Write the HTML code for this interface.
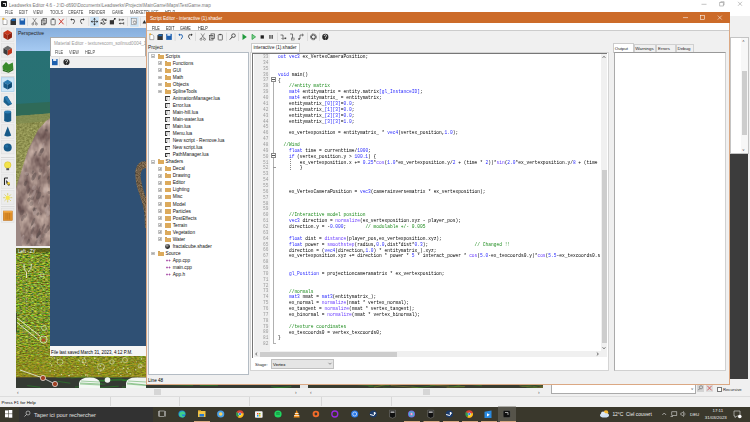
<!DOCTYPE html><html><head><meta charset="utf-8"><style>
*{margin:0;padding:0;box-sizing:border-box}
html,body{width:750px;height:422px;overflow:hidden;background:#f0f0f0;font-family:"Liberation Sans",sans-serif}
div{position:absolute}
.t{white-space:pre;line-height:1.2}
b{font-weight:normal;color:#2b2bff}i{font-style:normal;color:#6a3cff}u{text-decoration:none;color:#2b2bff}s{text-decoration:none;color:#1a8a1a}
.m{font-family:"Liberation Mono",monospace;white-space:pre}
</style></head><body>
<div style="left:0px;top:0px;width:750px;height:16px;background:#fff"></div>
<div style="left:1px;top:1px;width:6px;height:6px;background:#1a1a1a;border-radius:1px"></div>
<div style="left:3px;top:2.5px;width:2.5px;height:3px;border-top:0.7px solid #ddd;border-right:0.7px solid #ddd"></div>
<div class="t" style="left:9px;top:2.57px;font-size:4.6px;color:#777;">Leadwerks Editor 4.6 - J:\D-d690\Documents\Leadwerks\Projects\MainGame\Maps\TestGame.map</div>
<svg style="position:absolute;left:690px;top:0" width="60" height="9" viewBox="690 0 60 9"><line x1="701.5" y1="4.3" x2="706.5" y2="4.3" stroke="#888" stroke-width="0.5"/><rect x="719.8" y="2.6" width="3.4" height="3.4" fill="none" stroke="#888" stroke-width="0.5"/><path d="M720.8,2.6 L720.8,1.7 L724.1,1.7 L724.1,5 L723.2,5" fill="none" stroke="#888" stroke-width="0.5"/><path d="M738,1.8 L742,5.8 M742,1.8 L738,5.8" stroke="#888" stroke-width="0.5"/></svg>
<div class="t" style="left:5px;top:10.21px;font-size:4.7px;color:#444;transform:scaleX(0.82);transform-origin:0 0;">FILE</div>
<div class="t" style="left:19px;top:10.21px;font-size:4.7px;color:#444;transform:scaleX(0.82);transform-origin:0 0;">EDIT</div>
<div class="t" style="left:33px;top:10.21px;font-size:4.7px;color:#444;transform:scaleX(0.82);transform-origin:0 0;">VIEW</div>
<div class="t" style="left:50px;top:10.21px;font-size:4.7px;color:#444;transform:scaleX(0.82);transform-origin:0 0;">TOOLS</div>
<div class="t" style="left:68px;top:10.21px;font-size:4.7px;color:#444;transform:scaleX(0.82);transform-origin:0 0;">CREATE</div>
<div class="t" style="left:89px;top:10.21px;font-size:4.7px;color:#444;transform:scaleX(0.82);transform-origin:0 0;">RENDER</div>
<div class="t" style="left:112px;top:10.21px;font-size:4.7px;color:#444;transform:scaleX(0.82);transform-origin:0 0;">GAME</div>
<div class="t" style="left:130px;top:10.21px;font-size:4.7px;color:#444;transform:scaleX(0.82);transform-origin:0 0;">MARKETPLACE</div>
<div class="t" style="left:165px;top:10.21px;font-size:4.7px;color:#444;transform:scaleX(0.82);transform-origin:0 0;">HELP</div>
<div style="left:0px;top:16px;width:750px;height:12px;background:#f0f0f0;border-top:0.5px solid #e0e0e0"></div>
<svg style="position:absolute;left:0px;top:16px" width="150" height="12" viewBox="0 16 150 12"><path d="M3,19 L5.5,19 L7,20.5 L7,24.5 L3,24.5Z" fill="#fff" stroke="#666" stroke-width="0.5"/><circle cx="3.3" cy="18.8" r="1.1" fill="#f0b030"/><path d="M10.5,20 L12.5,18.5 L16,18.5 L16,25 L10.5,25Z" fill="#333"/><path d="M11.5,19 L15.5,19 L15.5,21 L11.5,21Z" fill="#1e66b0"/><rect x="19.5" y="18.5" width="5.6" height="6.2" fill="#1d5fae"/><rect x="20.6" y="18.5" width="3.2" height="2" fill="#dde8f5"/><rect x="27.3" y="17.5" width="0.5" height="8.5" fill="#c8c8c8"/><path d="M32.8,18 L36.4,23.5 M36.4,18 L32.8,23.5" stroke="#555" stroke-width="0.6"/><circle cx="32.8" cy="24" r="1" fill="none" stroke="#555" stroke-width="0.6"/><circle cx="36.4" cy="24" r="1" fill="none" stroke="#555" stroke-width="0.6"/><rect x="41.5" y="20" width="3.5" height="4.8" fill="none" stroke="#444" stroke-width="0.7"/><rect x="43" y="18.5" width="3.5" height="4.8" fill="none" stroke="#444" stroke-width="0.7"/><rect x="51" y="19.2" width="4.2" height="5.6" rx="0.6" fill="none" stroke="#444" stroke-width="0.7"/><rect x="52.2" y="18.5" width="1.8" height="1.2" fill="#444"/><path d="M58.8,18.8 L63.6,24.3 M63.6,18.8 L58.8,24.3" stroke="#c8281c" stroke-width="0.9"/><rect x="66.4" y="17.5" width="0.5" height="8.5" fill="#c8c8c8"/><path d="M71,19.5 L74,19.5 Q75.5,21.5 73,24" stroke="#333" stroke-width="0.8" fill="none"/><path d="M70.3,19.5 L72,18.2 L72,20.8Z" fill="#333"/><path d="M84,19.5 L81,19.5 Q79.5,21.5 82,24" stroke="#333" stroke-width="0.8" fill="none"/><path d="M84.7,19.5 L83,18.2 L83,20.8Z" fill="#333"/><rect x="88.6" y="17.5" width="0.5" height="8.5" fill="#c8c8c8"/><rect x="90.2" y="16.8" width="8.6" height="10" fill="#cce4f7"/><path d="M94.5,18.8 L94.5,24.4 M91.7,21.6 L97.3,21.6" stroke="#333" stroke-width="0.6"/><path d="M94.5,17.8 L93.2,19.4 L95.8,19.4Z M94.5,25.4 L93.2,23.8 L95.8,23.8Z M90.8,21.6 L92.4,20.3 L92.4,22.9Z M98.2,21.6 L96.6,20.3 L96.6,22.9Z" fill="#333"/><path d="M101.2,20.5 A2.6,2.6 0 0 1 105.8,20.3 M105.8,22.7 A2.6,2.6 0 0 1 101.2,22.9" stroke="#333" stroke-width="0.9" fill="none"/><path d="M106.4,18.6 L106.4,21 L104.2,20.6Z M100.6,24.6 L100.6,22.2 L102.8,22.6Z" fill="#333"/><path d="M102.5,19.8 L104.5,23.4" stroke="#333" stroke-width="0.8"/><rect x="109.8" y="20.2" width="4.2" height="4.2" fill="#333"/><path d="M112,22 L115,18.5" stroke="#333" stroke-width="0.8"/><rect x="114" y="18" width="1.6" height="1.6" fill="#333"/><path d="M119.3,18.6 L119.3,21 M119.3,19.8 L123.2,19.8 M123.7,22.2 L123.7,24.6 M119.8,23.4 L123.7,23.4" stroke="#333" stroke-width="0.7"/><path d="M124.2,19.8 L122.6,18.8 L122.6,20.8Z M118.8,23.4 L120.4,22.4 L120.4,24.4Z" fill="#333"/><rect x="127.2" y="17.5" width="0.5" height="8.5" fill="#c8c8c8"/><rect x="130.2" y="16.8" width="8.4" height="10" fill="#cce4f7"/><rect x="131.6" y="18.6" width="5" height="6" fill="#f4f4f4" stroke="#777" stroke-width="0.5"/><path d="M132.6,20 L135.6,20 M132.6,21.2 L135.6,21.2" stroke="#aaa" stroke-width="0.4"/><circle cx="134.6" cy="22.4" r="1.3" fill="none" stroke="#555" stroke-width="0.5"/><rect x="140.2" y="17.5" width="0.5" height="8.5" fill="#c8c8c8"/><path d="M142.5,23.5 L144.4,20 L146.3,23.5Z" fill="#333"/></svg>
<div style="left:0px;top:28px;width:16px;height:368px;background:#f0f0f0"></div>
<svg style="position:absolute;left:0px;top:26px" width="16" height="200" viewBox="0 26 16 200"><rect x="1.5" y="28" width="12.5" height="13.5" fill="#ececec" stroke="#dcdcdc" stroke-width="0.5"/><rect x="1.5" y="43.6" width="12.5" height="13.5" fill="#ececec" stroke="#dcdcdc" stroke-width="0.5"/><rect x="1.5" y="60.2" width="12.5" height="13.5" fill="#ececec" stroke="#dcdcdc" stroke-width="0.5"/><rect x="1.5" y="77.7" width="12.5" height="13.5" fill="#ececec" stroke="#dcdcdc" stroke-width="0.5"/><rect x="1.5" y="93.8" width="12.5" height="13.5" fill="#ececec" stroke="#dcdcdc" stroke-width="0.5"/><rect x="1.5" y="109.2" width="12.5" height="13.5" fill="#ececec" stroke="#dcdcdc" stroke-width="0.5"/><rect x="1.5" y="124.80000000000001" width="12.5" height="13.5" fill="#ececec" stroke="#dcdcdc" stroke-width="0.5"/><rect x="1.5" y="140.4" width="12.5" height="13.5" fill="#ececec" stroke="#dcdcdc" stroke-width="0.5"/><rect x="1.5" y="159.4" width="12.5" height="13.5" fill="#ececec" stroke="#dcdcdc" stroke-width="0.5"/><rect x="1.5" y="174.8" width="12.5" height="13.5" fill="#ececec" stroke="#dcdcdc" stroke-width="0.5"/><rect x="1.5" y="190.7" width="12.5" height="13.5" fill="#ececec" stroke="#dcdcdc" stroke-width="0.5"/><rect x="1.5" y="208.7" width="12.5" height="13.5" fill="#ececec" stroke="#dcdcdc" stroke-width="0.5"/><rect x="1" y="76.2" width="13.5" height="0.6" fill="#c8c8c8"/><rect x="1" y="157" width="13.5" height="0.6" fill="#c8c8c8"/><rect x="1" y="206.5" width="13.5" height="0.6" fill="#c8c8c8"/><rect x="1.5" y="77.8" width="12.5" height="13.5" fill="#cde6f7" stroke="#98c8ec" stroke-width="0.6"/><polygon points="7.7,30.1 11.963000000000001,32.55 7.7,35 3.4370000000000003,32.55" fill="#c8381c"/><polygon points="3.4370000000000003,32.55 7.7,35 7.7,39.9 3.4370000000000003,37.45" fill="#a82a14"/><polygon points="11.963000000000001,32.55 7.7,35 7.7,39.9 11.963000000000001,37.45" fill="#8c200e"/><polygon points="7.7,45.7 11.963000000000001,48.15 7.7,50.6 3.4370000000000003,48.15" fill="#6a6a6a"/><polygon points="3.4370000000000003,48.15 7.7,50.6 7.7,55.5 3.4370000000000003,53.050000000000004" fill="#3c3c3c"/><polygon points="11.963000000000001,48.15 7.7,50.6 7.7,55.5 11.963000000000001,53.050000000000004" fill="#c03418"/><path d="M2.5,66 L6,62 L8.8,64.6 L12.8,62.5 L13.3,68.5 L8.6,71.5 L2.8,69.5 Z" fill="#3a8a2c"/><path d="M2.8,69.5 L8.6,71.5 L13.3,68.5 L13.3,70.3 L8.6,72.8 L2.8,71Z" fill="#2a6a20"/><polygon points="7.7,79.8 11.963000000000001,82.25 7.7,84.7 3.4370000000000003,82.25" fill="#2a7ab0"/><polygon points="3.4370000000000003,82.25 7.7,84.7 7.7,89.60000000000001 3.4370000000000003,87.15" fill="#175a88"/><polygon points="11.963000000000001,82.25 7.7,84.7 7.7,89.60000000000001 11.963000000000001,87.15" fill="#0f4a74"/><path d="M4,97 L7,96 L12,104 L8,106 L3.5,102 Z" fill="#1a5f8c"/><path d="M4,97 L7,96 L12,104 L8.5,103.5Z" fill="#2a7ab0"/><rect x="4.2" y="112" width="7" height="8.5" fill="#175a88"/><ellipse cx="7.7" cy="112" rx="3.5" ry="1.4" fill="#2a7ab0"/><ellipse cx="7.7" cy="120.5" rx="3.5" ry="1.4" fill="#175a88"/><path d="M7.7,126.5 L11.2,135.5 Q7.7,137.5 4.2,135.5 Z" fill="#175a88"/><circle cx="7.7" cy="147.4" r="4" fill="#175a88"/><circle cx="6.6" cy="146.2" r="1.6" fill="#2a7ab0" opacity="0.6"/><circle cx="7.7" cy="165" r="3.3" fill="#f3e34a" stroke="#c8b020" stroke-width="0.4"/><rect x="6.3" y="168.2" width="2.8" height="2" fill="#555"/><path d="M4.5,178 L4.5,185 M4.5,178 L8,178" stroke="#222" stroke-width="1.1" fill="none"/><path d="M6,180 L10,184 L9,186 L6.5,183.5Z" fill="#222"/><circle cx="8.6" cy="183.4" r="1.4" fill="#f0d030"/><line x1="10.30" y1="197.70" x2="12.30" y2="197.70" stroke="#c8b830" stroke-width="0.6"/><line x1="5.10" y1="197.70" x2="3.10" y2="197.70" stroke="#c8b830" stroke-width="0.6"/><line x1="7.70" y1="200.30" x2="7.70" y2="202.30" stroke="#c8b830" stroke-width="0.6"/><line x1="7.70" y1="195.10" x2="7.70" y2="193.10" stroke="#c8b830" stroke-width="0.6"/><line x1="9.52" y1="199.52" x2="10.92" y2="200.92" stroke="#c8b830" stroke-width="0.6"/><line x1="5.88" y1="199.52" x2="4.48" y2="200.92" stroke="#c8b830" stroke-width="0.6"/><line x1="9.52" y1="195.88" x2="10.92" y2="194.48" stroke="#c8b830" stroke-width="0.6"/><line x1="5.88" y1="195.88" x2="4.48" y2="194.48" stroke="#c8b830" stroke-width="0.6"/><circle cx="7.7" cy="197.7" r="2.2" fill="#f5e650"/><rect x="3.3" y="211" width="9" height="9.5" fill="#e0902a" stroke="#b86a18" stroke-width="0.5"/><rect x="3.3" y="211" width="9" height="1.5" fill="#f0a845"/><line x1="6" y1="213" x2="6" y2="219.5" stroke="#b06818" stroke-width="0.5"/><line x1="7.8" y1="213" x2="7.8" y2="219.5" stroke="#b06818" stroke-width="0.5"/><line x1="9.6" y1="213" x2="9.6" y2="219.5" stroke="#b06818" stroke-width="0.5"/></svg>
<svg style="position:absolute;left:16px;top:28px" width="130" height="218" viewBox="16 28 130 218"><defs><linearGradient id="sky" x1="0" y1="0" x2="0" y2="1"><stop offset="0" stop-color="#86aedc"/><stop offset="1" stop-color="#a6caf2"/></linearGradient><linearGradient id="sea" x1="0" y1="0" x2="0" y2="1"><stop offset="0" stop-color="#287174"/><stop offset="1" stop-color="#2a6f70"/></linearGradient><linearGradient id="grass" x1="0" y1="0" x2="1" y2="1"><stop offset="0" stop-color="#8a9050"/><stop offset="1" stop-color="#a49a62"/></linearGradient></defs><rect x="16" y="28" width="130" height="23" fill="url(#sky)"/><rect x="16" y="51" width="130" height="195" fill="url(#sea)"/><path d="M16,104 L146,96 L146,246 L16,246Z" fill="#2f6a58"/><defs><filter id="gr" color-interpolation-filters="sRGB" x="16" y="100" width="130" height="146" filterUnits="userSpaceOnUse"><feTurbulence type="fractalNoise" baseFrequency="0.4 0.6" numOctaves="2" seed="4" result="t"/><feColorMatrix in="t" type="matrix" values="0 0 0 0.35 0.39  0 0 0 0.35 0.40  0 0 0 0.3 0.17  0 0 0 0 1"/><feComposite in2="SourceGraphic" operator="in"/></filter></defs><path d="M16,116 L146,106 L146,246 L16,246Z" fill="#9a985c" filter="url(#gr)"/><path d="M16,116 L146,106 L146,112 L16,124Z" fill="#7c8a50" opacity="0.7"/><defs><filter id="rk" color-interpolation-filters="sRGB" x="16" y="100" width="130" height="146" filterUnits="userSpaceOnUse"><feTurbulence type="fractalNoise" baseFrequency="0.12 0.07" numOctaves="3" seed="12" result="t"/><feColorMatrix in="t" type="matrix" values="0 0 0 0.55 0.33  0 0 0 0.55 0.24  0 0 0 0.5 0.24  0 0 0 0 1"/><feComposite in2="SourceGraphic" operator="in"/></filter></defs><path d="M16,188 L28,150 L38,130 L46,121 L52,117 L146,110 L146,246 L16,246Z" fill="#8a7877" filter="url(#rk)"/><ellipse cx="28.7" cy="190.9" rx="1.1" ry="3.1" fill="#5a4c4c" opacity="0.4" transform="rotate(25 28.7 190.9)"/><ellipse cx="39.0" cy="235.0" rx="1.2" ry="2.9" fill="#6c5e5c" opacity="0.4" transform="rotate(25 39.0 235.0)"/><ellipse cx="49.9" cy="181.9" rx="1.8" ry="2.7" fill="#6c5e5c" opacity="0.4" transform="rotate(25 49.9 181.9)"/><ellipse cx="47.9" cy="172.2" rx="0.5" ry="3.7" fill="#6c5e5c" opacity="0.4" transform="rotate(25 47.9 172.2)"/><ellipse cx="43.2" cy="196.5" rx="1.0" ry="1.1" fill="#4a4040" opacity="0.4" transform="rotate(25 43.2 196.5)"/><ellipse cx="35.2" cy="212.0" rx="1.8" ry="3.5" fill="#b8a8a4" opacity="0.4" transform="rotate(25 35.2 212.0)"/><ellipse cx="33.1" cy="221.9" rx="1.2" ry="4.3" fill="#4a4040" opacity="0.4" transform="rotate(25 33.1 221.9)"/><ellipse cx="28.1" cy="241.8" rx="1.2" ry="3.2" fill="#4a4040" opacity="0.4" transform="rotate(25 28.1 241.8)"/><ellipse cx="33.8" cy="225.9" rx="1.4" ry="2.9" fill="#b8a8a4" opacity="0.4" transform="rotate(25 33.8 225.9)"/><ellipse cx="38.4" cy="234.4" rx="1.5" ry="4.3" fill="#4a4040" opacity="0.4" transform="rotate(25 38.4 234.4)"/><ellipse cx="49.7" cy="206.2" rx="0.7" ry="4.0" fill="#5a4c4c" opacity="0.4" transform="rotate(25 49.7 206.2)"/><ellipse cx="42.0" cy="150.5" rx="1.7" ry="3.0" fill="#4a4040" opacity="0.4" transform="rotate(25 42.0 150.5)"/><ellipse cx="25.5" cy="183.3" rx="1.5" ry="2.7" fill="#4a4040" opacity="0.4" transform="rotate(25 25.5 183.3)"/><ellipse cx="44.4" cy="174.7" rx="0.7" ry="2.0" fill="#b8a8a4" opacity="0.4" transform="rotate(25 44.4 174.7)"/><ellipse cx="46.4" cy="130.3" rx="1.4" ry="1.2" fill="#4a4040" opacity="0.4" transform="rotate(25 46.4 130.3)"/><ellipse cx="37.4" cy="236.5" rx="0.9" ry="1.8" fill="#5a4c4c" opacity="0.4" transform="rotate(25 37.4 236.5)"/><ellipse cx="27.5" cy="174.4" rx="1.4" ry="1.5" fill="#5a4c4c" opacity="0.4" transform="rotate(25 27.5 174.4)"/><ellipse cx="49.4" cy="166.1" rx="1.0" ry="1.5" fill="#b8a8a4" opacity="0.4" transform="rotate(25 49.4 166.1)"/><ellipse cx="32.5" cy="230.3" rx="1.1" ry="4.0" fill="#5a4c4c" opacity="0.4" transform="rotate(25 32.5 230.3)"/><ellipse cx="39.4" cy="238.8" rx="1.3" ry="2.5" fill="#6c5e5c" opacity="0.4" transform="rotate(25 39.4 238.8)"/><ellipse cx="48.2" cy="177.9" rx="0.9" ry="2.1" fill="#4a4040" opacity="0.4" transform="rotate(25 48.2 177.9)"/><ellipse cx="39.2" cy="201.5" rx="0.6" ry="3.2" fill="#b8a8a4" opacity="0.4" transform="rotate(25 39.2 201.5)"/><ellipse cx="31.9" cy="236.0" rx="1.4" ry="2.0" fill="#b8a8a4" opacity="0.4" transform="rotate(25 31.9 236.0)"/><ellipse cx="40.9" cy="241.6" rx="0.9" ry="2.6" fill="#4a4040" opacity="0.4" transform="rotate(25 40.9 241.6)"/><ellipse cx="43.2" cy="227.1" rx="0.9" ry="3.8" fill="#5a4c4c" opacity="0.4" transform="rotate(25 43.2 227.1)"/><ellipse cx="37.9" cy="214.0" rx="1.0" ry="1.8" fill="#4a4040" opacity="0.4" transform="rotate(25 37.9 214.0)"/><ellipse cx="34.2" cy="209.5" rx="0.7" ry="2.1" fill="#4a4040" opacity="0.4" transform="rotate(25 34.2 209.5)"/><ellipse cx="40.9" cy="152.2" rx="1.7" ry="4.4" fill="#5a4c4c" opacity="0.4" transform="rotate(25 40.9 152.2)"/><ellipse cx="31.4" cy="203.7" rx="1.8" ry="2.6" fill="#6c5e5c" opacity="0.4" transform="rotate(25 31.4 203.7)"/><ellipse cx="48.8" cy="163.1" rx="1.8" ry="3.0" fill="#4a4040" opacity="0.4" transform="rotate(25 48.8 163.1)"/><ellipse cx="31.5" cy="225.2" rx="0.6" ry="3.2" fill="#6c5e5c" opacity="0.4" transform="rotate(25 31.5 225.2)"/><ellipse cx="33.8" cy="187.7" rx="1.8" ry="2.6" fill="#b8a8a4" opacity="0.4" transform="rotate(25 33.8 187.7)"/><ellipse cx="30.1" cy="193.8" rx="0.6" ry="2.4" fill="#6c5e5c" opacity="0.4" transform="rotate(25 30.1 193.8)"/><ellipse cx="22.1" cy="239.1" rx="1.8" ry="4.5" fill="#b8a8a4" opacity="0.4" transform="rotate(25 22.1 239.1)"/><ellipse cx="37.6" cy="244.3" rx="1.6" ry="1.1" fill="#b8a8a4" opacity="0.4" transform="rotate(25 37.6 244.3)"/><ellipse cx="45.4" cy="205.2" rx="1.3" ry="2.0" fill="#4a4040" opacity="0.4" transform="rotate(25 45.4 205.2)"/><ellipse cx="46.9" cy="229.2" rx="1.8" ry="4.4" fill="#5a4c4c" opacity="0.4" transform="rotate(25 46.9 229.2)"/><ellipse cx="47.3" cy="208.9" rx="1.9" ry="4.1" fill="#b8a8a4" opacity="0.4" transform="rotate(25 47.3 208.9)"/><ellipse cx="42.9" cy="145.8" rx="0.9" ry="3.3" fill="#b8a8a4" opacity="0.4" transform="rotate(25 42.9 145.8)"/><ellipse cx="23.5" cy="235.5" rx="0.7" ry="1.4" fill="#b8a8a4" opacity="0.4" transform="rotate(25 23.5 235.5)"/><ellipse cx="46.9" cy="139.4" rx="0.9" ry="2.0" fill="#6c5e5c" opacity="0.4" transform="rotate(25 46.9 139.4)"/><ellipse cx="39.6" cy="229.4" rx="0.6" ry="1.9" fill="#4a4040" opacity="0.4" transform="rotate(25 39.6 229.4)"/><ellipse cx="39.3" cy="187.9" rx="0.6" ry="2.1" fill="#5a4c4c" opacity="0.4" transform="rotate(25 39.3 187.9)"/><ellipse cx="46.0" cy="218.8" rx="0.6" ry="1.2" fill="#b8a8a4" opacity="0.4" transform="rotate(25 46.0 218.8)"/><ellipse cx="49.3" cy="228.4" rx="0.6" ry="2.8" fill="#4a4040" opacity="0.4" transform="rotate(25 49.3 228.4)"/><ellipse cx="32.8" cy="172.1" rx="1.0" ry="1.9" fill="#4a4040" opacity="0.4" transform="rotate(25 32.8 172.1)"/><ellipse cx="22.1" cy="212.5" rx="1.7" ry="3.0" fill="#5a4c4c" opacity="0.4" transform="rotate(25 22.1 212.5)"/><ellipse cx="32.5" cy="198.1" rx="1.7" ry="2.3" fill="#5a4c4c" opacity="0.4" transform="rotate(25 32.5 198.1)"/><ellipse cx="39.4" cy="177.2" rx="1.1" ry="2.7" fill="#4a4040" opacity="0.4" transform="rotate(25 39.4 177.2)"/><ellipse cx="33.8" cy="209.0" rx="1.2" ry="1.9" fill="#4a4040" opacity="0.4" transform="rotate(25 33.8 209.0)"/><ellipse cx="33.9" cy="176.5" rx="1.8" ry="4.3" fill="#4a4040" opacity="0.4" transform="rotate(25 33.9 176.5)"/><ellipse cx="49.1" cy="192.6" rx="1.8" ry="1.4" fill="#5a4c4c" opacity="0.4" transform="rotate(25 49.1 192.6)"/><ellipse cx="48.3" cy="213.5" rx="1.8" ry="2.9" fill="#b8a8a4" opacity="0.4" transform="rotate(25 48.3 213.5)"/><ellipse cx="40.7" cy="213.8" rx="1.3" ry="1.4" fill="#5a4c4c" opacity="0.4" transform="rotate(25 40.7 213.8)"/><ellipse cx="35.3" cy="153.6" rx="1.1" ry="2.8" fill="#5a4c4c" opacity="0.4" transform="rotate(25 35.3 153.6)"/><ellipse cx="40.5" cy="170.5" rx="1.7" ry="2.2" fill="#5a4c4c" opacity="0.4" transform="rotate(25 40.5 170.5)"/><ellipse cx="35.5" cy="209.3" rx="0.9" ry="2.0" fill="#5a4c4c" opacity="0.4" transform="rotate(25 35.5 209.3)"/><ellipse cx="23.0" cy="217.9" rx="1.3" ry="3.5" fill="#5a4c4c" opacity="0.4" transform="rotate(25 23.0 217.9)"/><ellipse cx="37.5" cy="191.6" rx="1.8" ry="1.6" fill="#5a4c4c" opacity="0.4" transform="rotate(25 37.5 191.6)"/><ellipse cx="29.0" cy="199.5" rx="1.6" ry="2.4" fill="#4a4040" opacity="0.4" transform="rotate(25 29.0 199.5)"/><ellipse cx="38.8" cy="238.6" rx="1.3" ry="4.4" fill="#b8a8a4" opacity="0.4" transform="rotate(25 38.8 238.6)"/><ellipse cx="36.0" cy="242.7" rx="1.1" ry="3.6" fill="#6c5e5c" opacity="0.4" transform="rotate(25 36.0 242.7)"/><ellipse cx="33.6" cy="193.8" rx="1.4" ry="4.2" fill="#b8a8a4" opacity="0.4" transform="rotate(25 33.6 193.8)"/><ellipse cx="26.4" cy="173.5" rx="1.8" ry="1.6" fill="#b8a8a4" opacity="0.4" transform="rotate(25 26.4 173.5)"/><ellipse cx="42.9" cy="235.9" rx="1.3" ry="2.6" fill="#6c5e5c" opacity="0.4" transform="rotate(25 42.9 235.9)"/><ellipse cx="25.8" cy="216.0" rx="0.7" ry="2.8" fill="#6c5e5c" opacity="0.4" transform="rotate(25 25.8 216.0)"/><ellipse cx="45.8" cy="190.1" rx="1.7" ry="3.3" fill="#b8a8a4" opacity="0.4" transform="rotate(25 45.8 190.1)"/><ellipse cx="38.7" cy="195.7" rx="2.0" ry="4.1" fill="#4a4040" opacity="0.4" transform="rotate(25 38.7 195.7)"/><path d="M16,190 L16,246 L22,246 Z" fill="#9c8884"/></svg>
<div class="t" style="left:18px;top:29.55px;font-size:5.0px;color:#222;">Perspective</div>
<svg style="position:absolute;left:16px;top:248px" width="284" height="140" viewBox="16 248 284 140"><defs><filter id="nz" color-interpolation-filters="sRGB" x="16" y="248" width="284" height="129" filterUnits="userSpaceOnUse"><feTurbulence type="fractalNoise" baseFrequency="0.35 0.9" numOctaves="2" seed="5" result="t"/><feColorMatrix in="t" type="matrix" values="0.55 0 0 0.75 -0.15  0 0.55 0 0.75 -0.06  0 0 0.45 0.3 -0.2  0 0 0 0 1"/></filter></defs><rect x="16" y="248" width="284" height="129" fill="#7a8a25" filter="url(#nz)"/><line x1="108.0" y1="269.2" x2="114.0" y2="271.3" stroke="#c8b850" stroke-width="0.4" opacity="0.6"/><line x1="42.7" y1="324.0" x2="49.9" y2="329.9" stroke="#b09a30" stroke-width="0.4" opacity="0.6"/><line x1="139.2" y1="258.9" x2="151.7" y2="253.8" stroke="#c8b850" stroke-width="0.4" opacity="0.6"/><line x1="51.2" y1="278.4" x2="73.9" y2="285.8" stroke="#c8b850" stroke-width="0.4" opacity="0.6"/><line x1="182.3" y1="256.3" x2="198.1" y2="252.9" stroke="#b09a30" stroke-width="0.4" opacity="0.6"/><line x1="98.2" y1="268.3" x2="108.8" y2="264.5" stroke="#c8b850" stroke-width="0.4" opacity="0.6"/><line x1="67.3" y1="323.9" x2="79.1" y2="327.9" stroke="#c8b850" stroke-width="0.4" opacity="0.6"/><line x1="218.2" y1="321.7" x2="232.5" y2="326.2" stroke="#c8b850" stroke-width="0.4" opacity="0.6"/><line x1="137.4" y1="289.9" x2="151.0" y2="293.5" stroke="#a08a28" stroke-width="0.4" opacity="0.6"/><line x1="86.6" y1="272.8" x2="92.3" y2="276.1" stroke="#a08a28" stroke-width="0.4" opacity="0.6"/><line x1="165.2" y1="361.1" x2="174.9" y2="365.8" stroke="#b09a30" stroke-width="0.4" opacity="0.6"/><line x1="49.5" y1="303.1" x2="56.6" y2="306.8" stroke="#a08a28" stroke-width="0.4" opacity="0.6"/><line x1="135.8" y1="372.2" x2="150.7" y2="365.9" stroke="#a08a28" stroke-width="0.4" opacity="0.6"/><line x1="112.6" y1="294.5" x2="133.3" y2="297.5" stroke="#b09a30" stroke-width="0.4" opacity="0.6"/><line x1="254.6" y1="370.0" x2="272.7" y2="372.1" stroke="#b09a30" stroke-width="0.4" opacity="0.6"/><line x1="223.6" y1="289.3" x2="241.7" y2="294.0" stroke="#a08a28" stroke-width="0.4" opacity="0.6"/><line x1="96.8" y1="299.0" x2="101.9" y2="301.0" stroke="#a08a28" stroke-width="0.4" opacity="0.6"/><line x1="117.0" y1="327.6" x2="126.2" y2="328.9" stroke="#a08a28" stroke-width="0.4" opacity="0.6"/><line x1="52.7" y1="281.4" x2="75.2" y2="281.6" stroke="#b09a30" stroke-width="0.4" opacity="0.6"/><line x1="63.2" y1="301.0" x2="70.9" y2="299.9" stroke="#a08a28" stroke-width="0.4" opacity="0.6"/><line x1="261.4" y1="285.4" x2="273.5" y2="285.8" stroke="#a08a28" stroke-width="0.4" opacity="0.6"/><line x1="288.0" y1="269.2" x2="297.3" y2="266.6" stroke="#b09a30" stroke-width="0.4" opacity="0.6"/><line x1="19.4" y1="355.5" x2="29.7" y2="352.8" stroke="#b09a30" stroke-width="0.4" opacity="0.6"/><line x1="135.0" y1="296.9" x2="158.4" y2="302.5" stroke="#c8b850" stroke-width="0.4" opacity="0.6"/><line x1="260.0" y1="370.7" x2="278.6" y2="377.5" stroke="#a08a28" stroke-width="0.4" opacity="0.6"/><line x1="271.5" y1="349.1" x2="288.3" y2="361.5" stroke="#a08a28" stroke-width="0.4" opacity="0.6"/><line x1="129.1" y1="300.1" x2="142.0" y2="301.7" stroke="#b09a30" stroke-width="0.4" opacity="0.6"/><line x1="35.1" y1="276.5" x2="46.4" y2="273.1" stroke="#b09a30" stroke-width="0.4" opacity="0.6"/><line x1="45.1" y1="322.0" x2="68.6" y2="326.7" stroke="#c8b850" stroke-width="0.4" opacity="0.6"/><line x1="23.2" y1="361.0" x2="30.9" y2="363.4" stroke="#a08a28" stroke-width="0.4" opacity="0.6"/><line x1="287.4" y1="326.5" x2="294.6" y2="327.3" stroke="#a08a28" stroke-width="0.4" opacity="0.6"/><line x1="298.0" y1="309.2" x2="304.7" y2="310.0" stroke="#b09a30" stroke-width="0.4" opacity="0.6"/><line x1="228.9" y1="344.0" x2="247.6" y2="346.3" stroke="#c8b850" stroke-width="0.4" opacity="0.6"/><line x1="22.6" y1="370.8" x2="30.4" y2="372.2" stroke="#c8b850" stroke-width="0.4" opacity="0.6"/><line x1="275.6" y1="346.3" x2="293.4" y2="344.3" stroke="#b09a30" stroke-width="0.4" opacity="0.6"/><line x1="213.7" y1="283.2" x2="222.1" y2="283.0" stroke="#b09a30" stroke-width="0.4" opacity="0.6"/><line x1="167.3" y1="348.9" x2="176.7" y2="348.3" stroke="#b09a30" stroke-width="0.4" opacity="0.6"/><line x1="244.9" y1="353.9" x2="253.5" y2="358.2" stroke="#c8b850" stroke-width="0.4" opacity="0.6"/><line x1="156.0" y1="342.8" x2="170.6" y2="357.6" stroke="#a08a28" stroke-width="0.4" opacity="0.6"/><line x1="89.6" y1="338.0" x2="99.9" y2="347.4" stroke="#c8b850" stroke-width="0.4" opacity="0.6"/><line x1="296.6" y1="371.3" x2="306.0" y2="371.0" stroke="#b09a30" stroke-width="0.4" opacity="0.6"/><line x1="149.5" y1="292.9" x2="174.0" y2="296.0" stroke="#c8b850" stroke-width="0.4" opacity="0.6"/><line x1="254.7" y1="310.9" x2="274.4" y2="318.1" stroke="#b09a30" stroke-width="0.4" opacity="0.6"/><line x1="253.0" y1="265.2" x2="272.3" y2="265.3" stroke="#b09a30" stroke-width="0.4" opacity="0.6"/><line x1="151.8" y1="272.7" x2="161.8" y2="278.5" stroke="#c8b850" stroke-width="0.4" opacity="0.6"/><line x1="128.4" y1="301.0" x2="142.9" y2="314.0" stroke="#b09a30" stroke-width="0.4" opacity="0.6"/><line x1="298.0" y1="253.5" x2="311.8" y2="257.3" stroke="#c8b850" stroke-width="0.4" opacity="0.6"/><line x1="57.5" y1="355.0" x2="70.5" y2="367.7" stroke="#a08a28" stroke-width="0.4" opacity="0.6"/><line x1="60.3" y1="319.6" x2="79.0" y2="310.1" stroke="#c8b850" stroke-width="0.4" opacity="0.6"/><line x1="200.5" y1="316.9" x2="210.8" y2="325.8" stroke="#b09a30" stroke-width="0.4" opacity="0.6"/><line x1="250.6" y1="276.8" x2="261.3" y2="274.9" stroke="#b09a30" stroke-width="0.4" opacity="0.6"/><line x1="232.9" y1="291.4" x2="254.1" y2="295.9" stroke="#b09a30" stroke-width="0.4" opacity="0.6"/><line x1="274.4" y1="294.9" x2="291.0" y2="296.5" stroke="#c8b850" stroke-width="0.4" opacity="0.6"/><line x1="135.5" y1="366.6" x2="150.9" y2="368.9" stroke="#c8b850" stroke-width="0.4" opacity="0.6"/><line x1="161.0" y1="360.8" x2="176.0" y2="369.2" stroke="#b09a30" stroke-width="0.4" opacity="0.6"/><line x1="64.9" y1="310.1" x2="79.5" y2="317.0" stroke="#a08a28" stroke-width="0.4" opacity="0.6"/><line x1="209.8" y1="317.4" x2="230.1" y2="320.0" stroke="#c8b850" stroke-width="0.4" opacity="0.6"/><line x1="32.1" y1="274.3" x2="38.4" y2="271.3" stroke="#a08a28" stroke-width="0.4" opacity="0.6"/><line x1="175.5" y1="346.5" x2="186.3" y2="355.3" stroke="#c8b850" stroke-width="0.4" opacity="0.6"/><line x1="292.4" y1="327.0" x2="302.7" y2="324.5" stroke="#c8b850" stroke-width="0.4" opacity="0.6"/><line x1="167.5" y1="310.7" x2="181.7" y2="323.3" stroke="#a08a28" stroke-width="0.4" opacity="0.6"/><line x1="278.1" y1="363.4" x2="291.6" y2="360.1" stroke="#a08a28" stroke-width="0.4" opacity="0.6"/><line x1="50.5" y1="306.1" x2="59.6" y2="302.3" stroke="#b09a30" stroke-width="0.4" opacity="0.6"/><line x1="76.4" y1="288.5" x2="95.8" y2="281.6" stroke="#c8b850" stroke-width="0.4" opacity="0.6"/><line x1="198.7" y1="296.5" x2="206.4" y2="295.2" stroke="#a08a28" stroke-width="0.4" opacity="0.6"/><line x1="78.4" y1="371.0" x2="93.1" y2="371.2" stroke="#c8b850" stroke-width="0.4" opacity="0.6"/><line x1="252.4" y1="270.5" x2="267.7" y2="271.4" stroke="#a08a28" stroke-width="0.4" opacity="0.6"/><line x1="135.6" y1="295.3" x2="147.1" y2="290.7" stroke="#a08a28" stroke-width="0.4" opacity="0.6"/><line x1="173.4" y1="305.9" x2="183.7" y2="300.6" stroke="#c8b850" stroke-width="0.4" opacity="0.6"/><line x1="99.9" y1="372.0" x2="121.8" y2="363.9" stroke="#b09a30" stroke-width="0.4" opacity="0.6"/><line x1="292.0" y1="263.3" x2="297.7" y2="262.4" stroke="#b09a30" stroke-width="0.4" opacity="0.6"/><line x1="92.8" y1="266.5" x2="116.0" y2="267.6" stroke="#a08a28" stroke-width="0.4" opacity="0.6"/><line x1="131.3" y1="318.1" x2="146.0" y2="320.7" stroke="#a08a28" stroke-width="0.4" opacity="0.6"/><line x1="41.4" y1="257.3" x2="53.9" y2="262.5" stroke="#b09a30" stroke-width="0.4" opacity="0.6"/><line x1="92.4" y1="252.1" x2="101.8" y2="248.3" stroke="#c8b850" stroke-width="0.4" opacity="0.6"/><line x1="259.2" y1="258.5" x2="270.6" y2="266.7" stroke="#a08a28" stroke-width="0.4" opacity="0.6"/><line x1="298.4" y1="303.1" x2="311.8" y2="314.2" stroke="#b09a30" stroke-width="0.4" opacity="0.6"/><line x1="165.6" y1="280.3" x2="173.4" y2="277.4" stroke="#b09a30" stroke-width="0.4" opacity="0.6"/><line x1="67.4" y1="368.4" x2="82.3" y2="373.3" stroke="#b09a30" stroke-width="0.4" opacity="0.6"/><line x1="98.3" y1="313.5" x2="109.9" y2="310.3" stroke="#b09a30" stroke-width="0.4" opacity="0.6"/><line x1="298.4" y1="254.7" x2="311.9" y2="247.8" stroke="#b09a30" stroke-width="0.4" opacity="0.6"/><line x1="162.0" y1="281.2" x2="180.1" y2="282.7" stroke="#c8b850" stroke-width="0.4" opacity="0.6"/><line x1="138.7" y1="312.9" x2="149.5" y2="320.0" stroke="#c8b850" stroke-width="0.4" opacity="0.6"/><line x1="103.4" y1="277.3" x2="112.2" y2="275.5" stroke="#c8b850" stroke-width="0.4" opacity="0.6"/><line x1="223.0" y1="267.7" x2="240.4" y2="285.2" stroke="#b09a30" stroke-width="0.4" opacity="0.6"/><line x1="20.0" y1="329.4" x2="30.9" y2="337.6" stroke="#b09a30" stroke-width="0.4" opacity="0.6"/><line x1="40.0" y1="356.8" x2="54.9" y2="367.7" stroke="#a08a28" stroke-width="0.4" opacity="0.6"/><line x1="186.1" y1="338.0" x2="193.9" y2="334.3" stroke="#a08a28" stroke-width="0.4" opacity="0.6"/><line x1="142.6" y1="283.4" x2="160.5" y2="300.1" stroke="#c8b850" stroke-width="0.4" opacity="0.6"/><line x1="107.9" y1="254.4" x2="115.3" y2="260.0" stroke="#b09a30" stroke-width="0.4" opacity="0.6"/><rect x="16" y="248" width="284" height="4" fill="#4a4a22" opacity="0.6"/><defs><linearGradient id="och" x1="0" y1="0" x2="0" y2="1"><stop offset="0" stop-color="#9a8010" stop-opacity="0"/><stop offset="1" stop-color="#9a8010" stop-opacity="0.55"/></linearGradient></defs><rect x="16" y="330" width="284" height="47" fill="url(#och)"/><path d="M24,263.5 Q23.5,269 25.5,271.5 M31.5,264 Q32,269 28,272 M26.5,271.5 L26.5,278" stroke="#eef0e0" stroke-width="0.9" fill="none" opacity="0.9"/><path d="M26.5,280 L26.5,310" stroke="#dde0c8" stroke-width="0.5" stroke-dasharray="1.5 1.5" fill="none" opacity="0.7"/><rect x="16" y="248" width="284" height="4.5" fill="#5a5a10" opacity="0.45"/><path d="M17,318 L40,336 M17,322.5 L38,339.5" stroke="#eef0e0" stroke-width="0.9" fill="none" opacity="0.9"/><path d="M16.5,313 L16.5,332" stroke="#2a3a30" stroke-width="1" opacity="0.7"/><circle cx="43.5" cy="339.5" r="3.6" fill="none" stroke="#eef0e0" stroke-width="0.7"/><circle cx="43.5" cy="340" r="1.8" fill="#b04a28"/><circle cx="42" cy="275" r="2" fill="none" stroke="#e8ecd8" stroke-width="0.5"/><circle cx="44" cy="328" r="2.5" fill="none" stroke="#e8ecd8" stroke-width="0.5"/><circle cx="101" cy="367" r="3.5" fill="none" stroke="#e8ecd8" stroke-width="0.6" opacity="0.8"/><circle cx="84" cy="361" r="2" fill="none" stroke="#e8ecd8" stroke-width="0.6" opacity="0.8"/><circle cx="112" cy="362" r="2.2" fill="none" stroke="#e8ecd8" stroke-width="0.6" opacity="0.8"/><circle cx="125" cy="360" r="2.5" fill="none" stroke="#e8ecd8" stroke-width="0.6" opacity="0.8"/><circle cx="60" cy="362" r="3" fill="none" stroke="#e8ecd8" stroke-width="0.6" opacity="0.8"/><circle cx="140" cy="366" r="2" fill="none" stroke="#e8ecd8" stroke-width="0.6" opacity="0.8"/><circle cx="50.1" cy="363.6" r="0.6" fill="#eef0d8" opacity="0.7"/><circle cx="98.3" cy="360.0" r="0.6" fill="#eef0d8" opacity="0.7"/><circle cx="50.5" cy="361.3" r="0.4" fill="#eef0d8" opacity="0.7"/><circle cx="88.4" cy="356.8" r="0.3" fill="#eef0d8" opacity="0.7"/><circle cx="79.2" cy="360.7" r="0.7" fill="#eef0d8" opacity="0.7"/><circle cx="100.8" cy="371.0" r="0.7" fill="#eef0d8" opacity="0.7"/><circle cx="118.7" cy="373.6" r="0.5" fill="#eef0d8" opacity="0.7"/><circle cx="81.3" cy="375.7" r="0.4" fill="#eef0d8" opacity="0.7"/><circle cx="119.5" cy="368.9" r="0.3" fill="#eef0d8" opacity="0.7"/><circle cx="130.2" cy="373.8" r="0.7" fill="#eef0d8" opacity="0.7"/><circle cx="120.4" cy="372.2" r="0.4" fill="#eef0d8" opacity="0.7"/><circle cx="100.3" cy="366.1" r="0.8" fill="#eef0d8" opacity="0.7"/><circle cx="127.2" cy="372.5" r="0.7" fill="#eef0d8" opacity="0.7"/><circle cx="135.7" cy="369.7" r="0.7" fill="#eef0d8" opacity="0.7"/><circle cx="72.1" cy="356.6" r="0.4" fill="#eef0d8" opacity="0.7"/><circle cx="84.6" cy="358.1" r="0.8" fill="#eef0d8" opacity="0.7"/><circle cx="103.6" cy="368.6" r="0.7" fill="#eef0d8" opacity="0.7"/><circle cx="115.3" cy="365.8" r="0.3" fill="#eef0d8" opacity="0.7"/><circle cx="126.6" cy="371.0" r="0.6" fill="#eef0d8" opacity="0.7"/><circle cx="101.4" cy="369.2" r="0.3" fill="#eef0d8" opacity="0.7"/><circle cx="120.7" cy="361.0" r="0.3" fill="#eef0d8" opacity="0.7"/><circle cx="75.5" cy="370.6" r="0.4" fill="#eef0d8" opacity="0.7"/><circle cx="121.0" cy="375.5" r="0.6" fill="#eef0d8" opacity="0.7"/><circle cx="86.7" cy="365.6" r="0.7" fill="#eef0d8" opacity="0.7"/><circle cx="123.6" cy="368.3" r="0.7" fill="#eef0d8" opacity="0.7"/><circle cx="57.4" cy="358.9" r="0.5" fill="#eef0d8" opacity="0.7"/><circle cx="121.3" cy="362.1" r="0.6" fill="#eef0d8" opacity="0.7"/><circle cx="51.2" cy="357.2" r="0.5" fill="#eef0d8" opacity="0.7"/><circle cx="114.5" cy="369.8" r="0.7" fill="#eef0d8" opacity="0.7"/><circle cx="77.9" cy="366.3" r="0.6" fill="#eef0d8" opacity="0.7"/><circle cx="94.8" cy="358.4" r="0.8" fill="#eef0d8" opacity="0.7"/><circle cx="69.1" cy="375.6" r="0.9" fill="#eef0d8" opacity="0.7"/><circle cx="51.7" cy="365.2" r="0.8" fill="#eef0d8" opacity="0.7"/><circle cx="142.9" cy="365.0" r="0.5" fill="#eef0d8" opacity="0.7"/><circle cx="70.1" cy="374.9" r="0.4" fill="#eef0d8" opacity="0.7"/><circle cx="105.8" cy="358.8" r="0.6" fill="#eef0d8" opacity="0.7"/><circle cx="141.5" cy="358.7" r="0.8" fill="#eef0d8" opacity="0.7"/><circle cx="98.8" cy="373.7" r="0.7" fill="#eef0d8" opacity="0.7"/><circle cx="72.2" cy="374.0" r="0.6" fill="#eef0d8" opacity="0.7"/><circle cx="52.4" cy="356.1" r="0.6" fill="#eef0d8" opacity="0.7"/><circle cx="93.3" cy="362.0" r="0.4" fill="#eef0d8" opacity="0.7"/><circle cx="83.0" cy="362.3" r="0.8" fill="#eef0d8" opacity="0.7"/><circle cx="50.2" cy="371.0" r="0.8" fill="#eef0d8" opacity="0.7"/><circle cx="61.5" cy="374.5" r="0.7" fill="#eef0d8" opacity="0.7"/><circle cx="136.6" cy="361.8" r="0.5" fill="#eef0d8" opacity="0.7"/><circle cx="87.7" cy="376.0" r="0.7" fill="#eef0d8" opacity="0.7"/><circle cx="84.6" cy="364.6" r="0.5" fill="#eef0d8" opacity="0.7"/><circle cx="54.6" cy="358.0" r="0.8" fill="#eef0d8" opacity="0.7"/><circle cx="77.4" cy="374.7" r="0.4" fill="#eef0d8" opacity="0.7"/><circle cx="75.5" cy="366.2" r="0.4" fill="#eef0d8" opacity="0.7"/><circle cx="85.8" cy="375.1" r="0.8" fill="#eef0d8" opacity="0.7"/><circle cx="127.9" cy="368.6" r="0.8" fill="#eef0d8" opacity="0.7"/><circle cx="140.3" cy="367.0" r="0.7" fill="#eef0d8" opacity="0.7"/><circle cx="54.7" cy="370.6" r="0.6" fill="#eef0d8" opacity="0.7"/><circle cx="122.3" cy="368.9" r="0.5" fill="#eef0d8" opacity="0.7"/><circle cx="54.7" cy="374.5" r="0.4" fill="#eef0d8" opacity="0.7"/><circle cx="95.3" cy="362.9" r="0.5" fill="#eef0d8" opacity="0.7"/><circle cx="120.9" cy="375.5" r="0.5" fill="#eef0d8" opacity="0.7"/><circle cx="113.0" cy="362.0" r="0.6" fill="#eef0d8" opacity="0.7"/><circle cx="87.9" cy="359.3" r="0.4" fill="#eef0d8" opacity="0.7"/><rect x="16" y="377" width="284" height="11" fill="#353a33"/><line x1="75.0" y1="387.0" x2="94.0" y2="385.8" stroke="#2a8a2a" stroke-width="0.6"/><line x1="273.4" y1="388.0" x2="291.3" y2="386.5" stroke="#2a8a2a" stroke-width="0.6"/><line x1="70.6" y1="378.0" x2="86.2" y2="376.4" stroke="#2a8a2a" stroke-width="0.6"/><line x1="83.9" y1="379.8" x2="104.4" y2="381.4" stroke="#2a8a2a" stroke-width="0.6"/><line x1="228.9" y1="381.5" x2="246.0" y2="381.6" stroke="#2a8a2a" stroke-width="0.6"/><line x1="123.0" y1="380.7" x2="132.4" y2="379.8" stroke="#2a8a2a" stroke-width="0.6"/><line x1="290.8" y1="378.4" x2="309.9" y2="378.9" stroke="#2a8a2a" stroke-width="0.6"/><line x1="261.1" y1="379.4" x2="275.0" y2="378.4" stroke="#2a8a2a" stroke-width="0.6"/><line x1="129.5" y1="381.9" x2="158.5" y2="383.3" stroke="#2a8a2a" stroke-width="0.6"/><line x1="263.9" y1="377.2" x2="272.6" y2="378.1" stroke="#2a8a2a" stroke-width="0.6"/><line x1="270.4" y1="382.2" x2="291.3" y2="380.2" stroke="#2a8a2a" stroke-width="0.6"/><line x1="127.2" y1="387.2" x2="153.4" y2="388.6" stroke="#2a8a2a" stroke-width="0.6"/><line x1="292.1" y1="379.7" x2="302.5" y2="378.4" stroke="#2a8a2a" stroke-width="0.6"/><line x1="164.4" y1="384.5" x2="193.1" y2="385.4" stroke="#2a8a2a" stroke-width="0.6"/><line x1="199.8" y1="385.4" x2="217.9" y2="385.6" stroke="#2a8a2a" stroke-width="0.6"/><line x1="27.2" y1="385.6" x2="40.3" y2="387.3" stroke="#2a8a2a" stroke-width="0.6"/><line x1="199.3" y1="380.3" x2="210.1" y2="379.3" stroke="#2a8a2a" stroke-width="0.6"/><line x1="196.7" y1="384.7" x2="207.2" y2="383.0" stroke="#2a8a2a" stroke-width="0.6"/><line x1="164.9" y1="383.4" x2="181.5" y2="382.3" stroke="#2a8a2a" stroke-width="0.6"/><line x1="186.7" y1="377.1" x2="201.3" y2="377.0" stroke="#2a8a2a" stroke-width="0.6"/><line x1="288.3" y1="384.1" x2="315.8" y2="384.0" stroke="#2a8a2a" stroke-width="0.6"/><line x1="82.7" y1="379.7" x2="111.8" y2="380.5" stroke="#2a8a2a" stroke-width="0.6"/><line x1="103.3" y1="377.2" x2="122.3" y2="377.9" stroke="#2a8a2a" stroke-width="0.6"/><line x1="135.3" y1="379.8" x2="158.0" y2="381.5" stroke="#2a8a2a" stroke-width="0.6"/><line x1="80.4" y1="377.4" x2="95.8" y2="377.1" stroke="#2a8a2a" stroke-width="0.6"/><line x1="209.8" y1="379.2" x2="235.4" y2="380.1" stroke="#2a8a2a" stroke-width="0.6"/><line x1="159.4" y1="379.3" x2="188.7" y2="378.5" stroke="#2a8a2a" stroke-width="0.6"/><line x1="248.9" y1="379.5" x2="261.8" y2="380.6" stroke="#2a8a2a" stroke-width="0.6"/><line x1="99.8" y1="387.5" x2="118.7" y2="386.2" stroke="#2a8a2a" stroke-width="0.6"/><line x1="79.4" y1="381.6" x2="102.1" y2="383.4" stroke="#2a8a2a" stroke-width="0.6"/><line x1="57.6" y1="381.3" x2="70.3" y2="383.2" stroke="#2a8a2a" stroke-width="0.6"/><line x1="56.3" y1="377.6" x2="65.6" y2="377.1" stroke="#2a8a2a" stroke-width="0.6"/><line x1="271.1" y1="386.7" x2="295.2" y2="388.7" stroke="#2a8a2a" stroke-width="0.6"/><line x1="280.6" y1="380.6" x2="292.7" y2="382.4" stroke="#2a8a2a" stroke-width="0.6"/><line x1="228.0" y1="377.4" x2="250.6" y2="376.9" stroke="#2a8a2a" stroke-width="0.6"/><line x1="122.2" y1="380.6" x2="133.9" y2="378.7" stroke="#2a8a2a" stroke-width="0.6"/><line x1="95.5" y1="380.9" x2="124.5" y2="379.4" stroke="#2a8a2a" stroke-width="0.6"/><line x1="289.9" y1="379.3" x2="305.7" y2="380.6" stroke="#2a8a2a" stroke-width="0.6"/><line x1="249.5" y1="381.8" x2="258.5" y2="381.7" stroke="#2a8a2a" stroke-width="0.6"/><line x1="121.9" y1="387.1" x2="134.1" y2="386.6" stroke="#2a8a2a" stroke-width="0.6"/><line x1="270.7" y1="377.3" x2="287.8" y2="378.6" stroke="#2a8a2a" stroke-width="0.6"/><line x1="233.7" y1="377.4" x2="242.5" y2="375.7" stroke="#2a8a2a" stroke-width="0.6"/><line x1="277.3" y1="379.8" x2="301.7" y2="381.4" stroke="#2a8a2a" stroke-width="0.6"/><line x1="112.3" y1="380.0" x2="141.4" y2="380.5" stroke="#2a8a2a" stroke-width="0.6"/><line x1="90.5" y1="384.9" x2="105.4" y2="384.0" stroke="#2a8a2a" stroke-width="0.6"/><line x1="137.5" y1="377" x2="137.5" y2="388" stroke="#b0a040" stroke-width="0.5"/><line x1="16" y1="377" x2="300" y2="377" stroke="#a08a20" stroke-width="0.6"/><path d="M79,388 L79,383 Q80,377.5 89.5,377.5 Q99,377.5 100,383 L100,388Z" fill="#f4f8f4"/><circle cx="107.5" cy="380" r="2.8" fill="#eef4ee"/><path d="M126,388 L126,383 Q127,377.5 136,377.5 L146,377.5 L146,388Z" fill="#f0f6f0"/><path d="M81,381 L99,382 M80,384 L100,385 M128,381 L146,382 M127,384 L146,385.5" stroke="#4aa04a" stroke-width="0.5"/><path d="M80,383 L100,384 M127,383 L146,385" stroke="#3a9a3a" stroke-width="0.5"/><line x1="20" y1="370" x2="43" y2="378" stroke="#e8e8e8" stroke-width="0.8"/><line x1="43" y1="378" x2="55" y2="384" stroke="#e8e8e8" stroke-width="0.8"/><circle cx="43" cy="378" r="2.6" fill="#a04020" stroke="#f0f0f0" stroke-width="0.7"/><circle cx="55" cy="384" r="2.6" fill="#a04020" stroke="#f0f0f0" stroke-width="0.7"/></svg>
<div class="t" style="left:18px;top:248.97px;font-size:4.6px;color:#fff;">Left - ZY</div>
<svg style="position:absolute;left:308px;top:248px" width="235" height="140" viewBox="308 248 235 140"><rect x="308" y="248" width="235" height="140" fill="#383c30"/><line x1="414.3" y1="384.5" x2="442.6" y2="384.3" stroke="#3a8a2a" stroke-width="0.5"/><line x1="351.4" y1="384.1" x2="373.3" y2="385.9" stroke="#3a8a2a" stroke-width="0.5"/><line x1="412.9" y1="381.1" x2="432.8" y2="383.5" stroke="#3a8a2a" stroke-width="0.5"/><line x1="447.9" y1="383.2" x2="465.9" y2="384.6" stroke="#3a8a2a" stroke-width="0.5"/><line x1="454.4" y1="386.7" x2="463.8" y2="383.9" stroke="#3a8a2a" stroke-width="0.5"/><line x1="448.9" y1="386.2" x2="464.1" y2="386.8" stroke="#3a8a2a" stroke-width="0.5"/><line x1="430.0" y1="385.1" x2="449.0" y2="386.1" stroke="#8a8a30" stroke-width="0.5"/><line x1="461.9" y1="383.3" x2="482.0" y2="385.8" stroke="#3a8a2a" stroke-width="0.5"/><line x1="474.3" y1="382.5" x2="487.4" y2="381.3" stroke="#3a8a2a" stroke-width="0.5"/><line x1="440.3" y1="380.9" x2="450.7" y2="379.6" stroke="#3a8a2a" stroke-width="0.5"/><line x1="533.1" y1="386.8" x2="541.2" y2="385.0" stroke="#3a8a2a" stroke-width="0.5"/><line x1="418.4" y1="387.8" x2="435.2" y2="385.3" stroke="#3a8a2a" stroke-width="0.5"/><line x1="491.0" y1="382.2" x2="500.9" y2="381.2" stroke="#8a8a30" stroke-width="0.5"/><line x1="486.1" y1="380.9" x2="499.6" y2="378.6" stroke="#3a8a2a" stroke-width="0.5"/><line x1="417.3" y1="383.9" x2="440.3" y2="382.0" stroke="#3a8a2a" stroke-width="0.5"/><line x1="539.5" y1="386.2" x2="556.8" y2="385.5" stroke="#8a8a30" stroke-width="0.5"/><line x1="406.9" y1="381.7" x2="420.8" y2="384.5" stroke="#8a8a30" stroke-width="0.5"/><line x1="542.5" y1="380.2" x2="554.6" y2="383.1" stroke="#3a8a2a" stroke-width="0.5"/><line x1="317.9" y1="381.2" x2="335.6" y2="378.2" stroke="#8a8a30" stroke-width="0.5"/><line x1="503.1" y1="383.1" x2="512.8" y2="381.3" stroke="#3a8a2a" stroke-width="0.5"/><line x1="311.6" y1="382.9" x2="333.3" y2="380.7" stroke="#8a8a30" stroke-width="0.5"/><line x1="503.6" y1="381.1" x2="520.1" y2="381.8" stroke="#8a8a30" stroke-width="0.5"/><line x1="521.5" y1="386.5" x2="535.0" y2="384.7" stroke="#3a8a2a" stroke-width="0.5"/><line x1="469.4" y1="383.1" x2="488.1" y2="380.6" stroke="#3a8a2a" stroke-width="0.5"/><line x1="332.4" y1="380.3" x2="361.6" y2="378.7" stroke="#8a8a30" stroke-width="0.5"/><line x1="368.4" y1="386.6" x2="389.5" y2="385.4" stroke="#3a8a2a" stroke-width="0.5"/><line x1="526.4" y1="387.8" x2="537.2" y2="387.7" stroke="#3a8a2a" stroke-width="0.5"/><line x1="373.9" y1="387.3" x2="386.3" y2="384.4" stroke="#8a8a30" stroke-width="0.5"/><line x1="404.7" y1="382.0" x2="413.7" y2="380.7" stroke="#3a8a2a" stroke-width="0.5"/><line x1="329.7" y1="381.1" x2="347.6" y2="380.1" stroke="#3a8a2a" stroke-width="0.5"/><line x1="446.6" y1="387.4" x2="465.1" y2="386.5" stroke="#8a8a30" stroke-width="0.5"/><line x1="534.3" y1="380.2" x2="556.2" y2="380.1" stroke="#8a8a30" stroke-width="0.5"/><line x1="382.9" y1="388.0" x2="392.6" y2="388.3" stroke="#3a8a2a" stroke-width="0.5"/><line x1="519.5" y1="385.9" x2="543.0" y2="387.7" stroke="#8a8a30" stroke-width="0.5"/><line x1="390.7" y1="385.5" x2="418.5" y2="387.7" stroke="#8a8a30" stroke-width="0.5"/><line x1="529.9" y1="380.2" x2="548.9" y2="377.3" stroke="#8a8a30" stroke-width="0.5"/><line x1="397.1" y1="380.1" x2="406.7" y2="377.6" stroke="#3a8a2a" stroke-width="0.5"/><line x1="541.4" y1="387.0" x2="565.5" y2="386.4" stroke="#8a8a30" stroke-width="0.5"/><line x1="411.5" y1="386.7" x2="421.4" y2="388.2" stroke="#3a8a2a" stroke-width="0.5"/><line x1="380.9" y1="380.7" x2="389.4" y2="383.4" stroke="#3a8a2a" stroke-width="0.5"/></svg>
<div style="left:16px;top:388px;width:284px;height:8px;background:#f0f0f0"></div>
<div style="left:300px;top:384px;width:8px;height:4px;background:#e8e8e8"></div>
<div style="left:308px;top:388px;width:235px;height:8px;background:#f0f0f0"></div>
<div class="t" style="left:17px;top:389.25px;font-size:5px;color:#555;">‹</div>
<div style="left:154px;top:388.5px;width:6.5px;height:6px;background:#d6d6d6"></div>
<div class="t" style="left:295px;top:389.25px;font-size:5px;color:#555;">›</div>
<div class="t" style="left:310px;top:389.25px;font-size:5px;color:#555;">‹</div>
<div style="left:423px;top:388.5px;width:6.5px;height:6px;background:#d6d6d6"></div>
<div class="t" style="left:538px;top:389.25px;font-size:5px;color:#555;">›</div>
<div style="left:0px;top:396px;width:750px;height:10px;background:#f0f0f0;border-top:0.5px solid #ddd"></div>
<div class="t" style="left:1.5px;top:399.58px;font-size:4.4px;color:#000;">Press F1 for Help</div>
<div style="left:110px;top:397px;width:0.5px;height:9px;background:#d8d8d8"></div>
<div style="left:179px;top:397px;width:0.5px;height:9px;background:#d8d8d8"></div>
<div style="left:249px;top:397px;width:0.5px;height:9px;background:#d8d8d8"></div>
<div style="left:321px;top:397px;width:0.5px;height:9px;background:#d8d8d8"></div>
<div style="left:391px;top:397px;width:0.5px;height:9px;background:#d8d8d8"></div>
<div style="left:545px;top:16px;width:205px;height:380px;background:#f0f0f0"></div>
<div style="left:730px;top:37px;width:19px;height:117px;background:#fff;border:0.6px solid #c4c4c4"></div>
<div style="left:741px;top:38px;width:7px;height:115px;background:#f7f7f7"></div>
<div class="t" style="left:742.3px;top:148.30px;font-size:4px;color:#444;">˅</div>
<div class="t" style="left:742.3px;top:39.30px;font-size:4px;color:#444;">˄</div>
<div style="left:741.5px;top:71px;width:5px;height:64px;background:#cdcdcd"></div>
<div style="left:730px;top:154px;width:18px;height:225px;background:#3c3c3c"></div>
<div style="left:551px;top:384px;width:145px;height:10px;background:#fff;border:0.5px solid #aaa"></div>
<div class="t" style="left:691px;top:386.80px;font-size:4px;color:#444;">˅</div>
<div style="left:697px;top:384px;width:7px;height:8px;background:#d4d4d4"></div>
<div style="left:706px;top:384px;width:7px;height:8px;background:#ddd"></div>
<svg style="position:absolute;left:706px;top:384px" width="7" height="8"><path d="M1.3,1.8 L5.7,6.4 M5.7,1.8 L1.3,6.4" stroke="#d04848" stroke-width="0.8"/></svg>
<div style="left:717px;top:386.5px;width:5px;height:5.5px;background:#fff;border:0.5px solid #777"></div>
<div class="t" style="left:723px;top:386.99px;font-size:4.2px;color:#222;">Recursive</div>
<div style="left:50px;top:37px;width:96px;height:319px;background:#fff;border:0.5px solid #aaa"></div>
<div class="t" style="left:54px;top:41.07px;font-size:4.6px;color:#999;">Material Editor - texturescom_soilmud0004_1</div>
<div class="t" style="left:55px;top:50.21px;font-size:4.7px;color:#444;transform:scaleX(0.82);transform-origin:0 0;">FILE</div>
<div class="t" style="left:69px;top:50.21px;font-size:4.7px;color:#444;transform:scaleX(0.82);transform-origin:0 0;">VIEW</div>
<div class="t" style="left:85px;top:50.21px;font-size:4.7px;color:#444;transform:scaleX(0.82);transform-origin:0 0;">HELP</div>
<div style="left:50px;top:56px;width:96px;height:12px;background:#f0f0f0;border-top:0.5px solid #ddd"></div>
<div style="left:50px;top:68px;width:96px;height:278px;background:#2f5074"></div>
<svg style="position:absolute;left:50px;top:56px" width="96" height="180" viewBox="50 56 96 180"><rect x="52" y="59" width="5.6" height="6.2" fill="#1d5fae"/><rect x="53.1" y="59" width="3.2" height="2" fill="#dde8f5"/><rect x="59.5" y="57.5" width="0.5" height="9" fill="#c8c8c8"/><circle cx="66.5" cy="62" r="3.1" fill="#2b2b2b"/><path d="M65.4,61.1 Q65.5,59.8 66.6,59.8 Q67.8,59.9 67.7,61 Q67.6,61.8 66.6,62.3 L66.6,63.1" stroke="#fff" stroke-width="0.7" fill="none"/><circle cx="66.6" cy="64.1" r="0.4" fill="#fff"/><defs><filter id="tor" color-interpolation-filters="sRGB" x="130" y="155" width="20" height="80" filterUnits="userSpaceOnUse"><feTurbulence type="fractalNoise" baseFrequency="0.9" numOctaves="2" seed="2" result="t"/><feColorMatrix in="t" type="matrix" values="0 0 0 0.5 0.2  0 0 0 0.45 0.15  0 0 0 0.4 0.08  0 0 0 0 1"/><feComposite in2="SourceGraphic" operator="in"/></filter></defs><path d="M146,161.5 Q138,160 135.5,170 Q134.5,182 140,196 Q143,204 144.5,214 L145,228 L146,228 L146,198 Q141.5,186 140.5,176 Q141,168 146,168Z" fill="#6e5e44" filter="url(#tor)"/></svg>
<div style="left:50px;top:346px;width:96px;height:10px;background:#f6f6f6"></div>
<div class="t" style="left:51px;top:349.55px;font-size:4.45px;color:#000;">File last saved March 31, 2023, 4:12 P.M.</div>
<div style="left:146px;top:12px;width:584px;height:372.5px;background:#f0f0f0;border:0.8px solid #dba883;border-top:0"></div>
<div style="left:146px;top:12px;width:584px;height:11.4px;background:#cc6b29"></div>
<div class="t" style="left:150px;top:15.97px;font-size:4.6px;color:#fff;">Script Editor - interactive (1).shader</div>
<svg style="position:absolute;left:680px;top:12px" width="50" height="12" viewBox="680 12 50 12"><line x1="683" y1="17.6" x2="688" y2="17.6" stroke="#fff" stroke-width="0.55"/><rect x="700.3" y="15.6" width="4" height="4" fill="none" stroke="#fff" stroke-width="0.55"/><path d="M717.8,15.6 L721.8,19.6 M721.8,15.6 L717.8,19.6" stroke="#fff" stroke-width="0.55"/></svg>
<div style="left:146.8px;top:23.4px;width:582.4px;height:7.6px;background:#fff;border-bottom:0.5px solid #ccc"></div>
<div class="t" style="left:152px;top:25.87px;font-size:4.6px;color:#222;transform:scaleX(0.8);transform-origin:0 0;">FILE</div>
<div class="t" style="left:166px;top:25.87px;font-size:4.6px;color:#222;transform:scaleX(0.8);transform-origin:0 0;">EDIT</div>
<div class="t" style="left:180px;top:25.87px;font-size:4.6px;color:#222;transform:scaleX(0.8);transform-origin:0 0;">GAME</div>
<div class="t" style="left:198px;top:25.87px;font-size:4.6px;color:#222;transform:scaleX(0.8);transform-origin:0 0;">HELP</div>
<svg style="position:absolute;left:146px;top:31px" width="185" height="12" viewBox="146 31 185 12"><path d="M149.8,34.5 L152.3,34.5 L153.8,36 L153.8,39.6 L149.8,39.6Z" fill="#fff" stroke="#666" stroke-width="0.5"/><circle cx="150.1" cy="34.3" r="1" fill="#f0b030"/><path d="M157.4,35.3 L159.3,33.9 L162.8,33.9 L162.8,40 L157.4,40Z" fill="#333"/><path d="M158.4,34.4 L162.3,34.4 L162.3,36.2 L158.4,36.2Z" fill="#1e66b0"/><rect x="166.2" y="33.9" width="5.6" height="6" fill="#1d5fae"/><rect x="167.3" y="33.9" width="3.2" height="1.9" fill="#dde8f5"/><rect x="174.8" y="32.5" width="0.5" height="8.5" fill="#c8c8c8"/><path d="M179,34.8 L182,34.8 Q183.5,36.8 181,39.3" stroke="#1d5fae" stroke-width="0.9" fill="none"/><path d="M178.3,34.8 L180,33.5 L180,36.1Z" fill="#1d5fae"/><path d="M192,34.8 L189,34.8 Q187.5,36.8 190,39.3" stroke="#333" stroke-width="0.8" fill="none"/><path d="M192.7,34.8 L191,33.5 L191,36.1Z" fill="#333"/><rect x="195" y="32.5" width="0.5" height="8.5" fill="#c8c8c8"/><path d="M201,33.5 L204.5,38.8 M204.5,33.5 L201,38.8" stroke="#555" stroke-width="0.6"/><circle cx="201" cy="39.3" r="1" fill="none" stroke="#555" stroke-width="0.6"/><circle cx="204.5" cy="39.3" r="1" fill="none" stroke="#555" stroke-width="0.6"/><rect x="209.5" y="35.4" width="3.5" height="4.6" fill="none" stroke="#444" stroke-width="0.7"/><rect x="211" y="33.9" width="3.5" height="4.6" fill="none" stroke="#444" stroke-width="0.7"/><rect x="218.2" y="34.6" width="4.2" height="5.4" rx="0.6" fill="none" stroke="#444" stroke-width="0.7"/><rect x="219.4" y="33.9" width="1.8" height="1.2" fill="#444"/><rect x="226" y="32.5" width="0.5" height="8.5" fill="#c8c8c8"/><circle cx="233.5" cy="35.6" r="1.8" fill="none" stroke="#333" stroke-width="0.8"/><path d="M232.2,37 L229.8,39.6" stroke="#333" stroke-width="1"/><rect x="238" y="32.5" width="0.5" height="8.5" fill="#c8c8c8"/><path d="M242.5,33.8 L246.8,36.9 L242.5,40Z" fill="#1f9a3c"/><path d="M252,34.3 L255.6,36.9 L252,39.5Z" fill="#7ccf8a" stroke="#1f9a3c" stroke-width="0.7"/><rect x="260.6" y="35.3" width="3.3" height="3.3" fill="#222"/><rect x="269.4" y="35" width="1.1" height="3.8" fill="#222"/><rect x="271.6" y="35" width="1.1" height="3.8" fill="#222"/><rect x="277" y="32.5" width="0.5" height="8.5" fill="#c8c8c8"/><path d="M280.5,35 L283,35 L283,39 M281.5,38 L283,39.5 L284.5,38" stroke="#444" stroke-width="0.7" fill="none"/><rect x="284.6" y="37.5" width="1.6" height="1.6" fill="#444"/><path d="M290,34 L292.5,34 L292.5,38.5" stroke="#444" stroke-width="0.7" fill="none"/><rect x="291.5" y="38" width="2.6" height="2" fill="none" stroke="#444" stroke-width="0.5"/><path d="M300,39 L300,35 L303,35 M302,33.8 L303.5,35 L302,36.2" stroke="#444" stroke-width="0.7" fill="none"/><rect x="298.3" y="38.2" width="1.6" height="1.6" fill="#444"/><rect x="307" y="32.5" width="0.5" height="8.5" fill="#c8c8c8"/><circle cx="313.4" cy="36.9" r="2.9" fill="none" stroke="#333" stroke-width="1" stroke-dasharray="0.9 0.6"/><circle cx="313.4" cy="36.9" r="2" fill="none" stroke="#333" stroke-width="0.9"/><rect x="319" y="32.5" width="0.5" height="8.5" fill="#c8c8c8"/><circle cx="325.3" cy="36.9" r="3.1" fill="#2b2b2b"/><path d="M324.2,36 Q324.3,34.7 325.4,34.7 Q326.6,34.8 326.5,35.9 Q326.4,36.7 325.4,37.2 L325.4,38" stroke="#fff" stroke-width="0.7" fill="none"/><circle cx="325.4" cy="39" r="0.4" fill="#fff"/></svg>
<div class="t" style="left:148px;top:44.96px;font-size:4.8px;color:#222;">Project</div>
<div style="left:147.5px;top:52px;width:101.5px;height:323px;background:#fff;border:0.6px solid #b4bcc4"></div>
<div style="left:150.9px;top:54.4px;width:3.8px;height:3.8px;border:0.5px solid #c4c4c4;background:#f4f4f4"></div>
<div style="left:151.9px;top:56.099999999999994px;width:1.8px;height:0.4px;background:#aaa"></div>
<div style="left:157.5px;top:53.8px;width:2.8px;height:1.2px;background:#c99a4e;border-radius:0.4px 0.4px 0 0"></div>
<div style="left:157.5px;top:54.5px;width:6px;height:4.2px;background:#dcaa5c"></div>
<div class="t" style="left:165.5px;top:53.69px;font-size:4.75px;color:#111;">Scripts</div>
<div style="left:158.1px;top:61.44px;width:3.8px;height:3.8px;border:0.5px solid #c4c4c4;background:#f4f4f4"></div>
<div style="left:159.1px;top:63.13999999999999px;width:1.8px;height:0.4px;background:#aaa"></div>
<div style="left:159.79999999999998px;top:62.44px;width:0.4px;height:1.8px;background:#aaa"></div>
<div style="left:164.7px;top:60.839999999999996px;width:2.8px;height:1.2px;background:#c99a4e;border-radius:0.4px 0.4px 0 0"></div>
<div style="left:164.7px;top:61.54px;width:6px;height:4.2px;background:#dcaa5c"></div>
<div class="t" style="left:172.7px;top:60.73px;font-size:4.75px;color:#111;">Functions</div>
<div style="left:158.1px;top:68.47999999999999px;width:3.8px;height:3.8px;border:0.5px solid #c4c4c4;background:#f4f4f4"></div>
<div style="left:159.1px;top:70.17999999999999px;width:1.8px;height:0.4px;background:#aaa"></div>
<div style="left:159.79999999999998px;top:69.47999999999999px;width:0.4px;height:1.8px;background:#aaa"></div>
<div style="left:164.7px;top:67.88px;width:2.8px;height:1.2px;background:#c99a4e;border-radius:0.4px 0.4px 0 0"></div>
<div style="left:164.7px;top:68.58px;width:6px;height:4.2px;background:#dcaa5c"></div>
<div class="t" style="left:172.7px;top:67.77px;font-size:4.75px;color:#111;">GUI</div>
<div style="left:158.1px;top:75.52px;width:3.8px;height:3.8px;border:0.5px solid #c4c4c4;background:#f4f4f4"></div>
<div style="left:159.1px;top:77.22px;width:1.8px;height:0.4px;background:#aaa"></div>
<div style="left:159.79999999999998px;top:76.52px;width:0.4px;height:1.8px;background:#aaa"></div>
<div style="left:164.7px;top:74.92px;width:2.8px;height:1.2px;background:#c99a4e;border-radius:0.4px 0.4px 0 0"></div>
<div style="left:164.7px;top:75.62px;width:6px;height:4.2px;background:#dcaa5c"></div>
<div class="t" style="left:172.7px;top:74.81px;font-size:4.75px;color:#111;">Math</div>
<div style="left:158.1px;top:82.55999999999999px;width:3.8px;height:3.8px;border:0.5px solid #c4c4c4;background:#f4f4f4"></div>
<div style="left:159.1px;top:84.25999999999999px;width:1.8px;height:0.4px;background:#aaa"></div>
<div style="left:159.79999999999998px;top:83.55999999999999px;width:0.4px;height:1.8px;background:#aaa"></div>
<div style="left:164.7px;top:81.96px;width:2.8px;height:1.2px;background:#c99a4e;border-radius:0.4px 0.4px 0 0"></div>
<div style="left:164.7px;top:82.66px;width:6px;height:4.2px;background:#dcaa5c"></div>
<div class="t" style="left:172.7px;top:81.85px;font-size:4.75px;color:#111;">Objects</div>
<div style="left:158.1px;top:89.6px;width:3.8px;height:3.8px;border:0.5px solid #c4c4c4;background:#f4f4f4"></div>
<div style="left:159.1px;top:91.3px;width:1.8px;height:0.4px;background:#aaa"></div>
<div style="left:159.79999999999998px;top:90.6px;width:0.4px;height:1.8px;background:#aaa"></div>
<div style="left:164.7px;top:89.0px;width:2.8px;height:1.2px;background:#c99a4e;border-radius:0.4px 0.4px 0 0"></div>
<div style="left:164.7px;top:89.7px;width:6px;height:4.2px;background:#dcaa5c"></div>
<div class="t" style="left:172.7px;top:88.89px;font-size:4.75px;color:#111;">SplineTools</div>
<div style="left:165.39999999999998px;top:96.24px;width:4.2px;height:4.4px;background:#d8d8d8;border-left:0.6px solid #444;border-top:0.8px solid #333"></div>
<div style="left:165.39999999999998px;top:100.13999999999999px;width:2px;height:0.8px;background:#333"></div>
<div style="left:167.6px;top:97.33999999999999px;width:1.2px;height:3px;background:#f4f4f4"></div>
<div class="t" style="left:172.7px;top:95.93px;font-size:4.75px;color:#111;">AnimationManager.lua</div>
<div style="left:165.39999999999998px;top:103.28px;width:4.2px;height:4.4px;background:#d8d8d8;border-left:0.6px solid #444;border-top:0.8px solid #333"></div>
<div style="left:165.39999999999998px;top:107.17999999999999px;width:2px;height:0.8px;background:#333"></div>
<div style="left:167.6px;top:104.38px;width:1.2px;height:3px;background:#f4f4f4"></div>
<div class="t" style="left:172.7px;top:102.97px;font-size:4.75px;color:#111;">Error.lua</div>
<div style="left:165.39999999999998px;top:110.32000000000001px;width:4.2px;height:4.4px;background:#d8d8d8;border-left:0.6px solid #444;border-top:0.8px solid #333"></div>
<div style="left:165.39999999999998px;top:114.22px;width:2px;height:0.8px;background:#333"></div>
<div style="left:167.6px;top:111.42px;width:1.2px;height:3px;background:#f4f4f4"></div>
<div class="t" style="left:172.7px;top:110.01px;font-size:4.75px;color:#111;">Main-hill.lua</div>
<div style="left:165.39999999999998px;top:117.36px;width:4.2px;height:4.4px;background:#d8d8d8;border-left:0.6px solid #444;border-top:0.8px solid #333"></div>
<div style="left:165.39999999999998px;top:121.25999999999999px;width:2px;height:0.8px;background:#333"></div>
<div style="left:167.6px;top:118.46px;width:1.2px;height:3px;background:#f4f4f4"></div>
<div class="t" style="left:172.7px;top:117.05px;font-size:4.75px;color:#111;">Main-water.lua</div>
<div style="left:165.39999999999998px;top:124.4px;width:4.2px;height:4.4px;background:#d8d8d8;border-left:0.6px solid #444;border-top:0.8px solid #333"></div>
<div style="left:165.39999999999998px;top:128.3px;width:2px;height:0.8px;background:#333"></div>
<div style="left:167.6px;top:125.5px;width:1.2px;height:3px;background:#f4f4f4"></div>
<div class="t" style="left:172.7px;top:124.09px;font-size:4.75px;color:#111;">Main.lua</div>
<div style="left:165.39999999999998px;top:131.44px;width:4.2px;height:4.4px;background:#d8d8d8;border-left:0.6px solid #444;border-top:0.8px solid #333"></div>
<div style="left:165.39999999999998px;top:135.34px;width:2px;height:0.8px;background:#333"></div>
<div style="left:167.6px;top:132.54000000000002px;width:1.2px;height:3px;background:#f4f4f4"></div>
<div class="t" style="left:172.7px;top:131.13px;font-size:4.75px;color:#111;">Menu.lua</div>
<div style="left:165.39999999999998px;top:138.48px;width:4.2px;height:4.4px;background:#d8d8d8;border-left:0.6px solid #444;border-top:0.8px solid #333"></div>
<div style="left:165.39999999999998px;top:142.38px;width:2px;height:0.8px;background:#333"></div>
<div style="left:167.6px;top:139.58px;width:1.2px;height:3px;background:#f4f4f4"></div>
<div class="t" style="left:172.7px;top:138.17px;font-size:4.75px;color:#111;">New script - Remove.lua</div>
<div style="left:165.39999999999998px;top:145.51999999999998px;width:4.2px;height:4.4px;background:#d8d8d8;border-left:0.6px solid #444;border-top:0.8px solid #333"></div>
<div style="left:165.39999999999998px;top:149.42px;width:2px;height:0.8px;background:#333"></div>
<div style="left:167.6px;top:146.62px;width:1.2px;height:3px;background:#f4f4f4"></div>
<div class="t" style="left:172.7px;top:145.21px;font-size:4.75px;color:#111;">New script.lua</div>
<div style="left:165.39999999999998px;top:152.56px;width:4.2px;height:4.4px;background:#d8d8d8;border-left:0.6px solid #444;border-top:0.8px solid #333"></div>
<div style="left:165.39999999999998px;top:156.46px;width:2px;height:0.8px;background:#333"></div>
<div style="left:167.6px;top:153.66000000000003px;width:1.2px;height:3px;background:#f4f4f4"></div>
<div class="t" style="left:172.7px;top:152.25px;font-size:4.75px;color:#111;">PathManager.lua</div>
<div style="left:150.9px;top:159.99999999999997px;width:3.8px;height:3.8px;border:0.5px solid #c4c4c4;background:#f4f4f4"></div>
<div style="left:151.9px;top:161.7px;width:1.8px;height:0.4px;background:#aaa"></div>
<div style="left:157.5px;top:159.39999999999998px;width:2.8px;height:1.2px;background:#c99a4e;border-radius:0.4px 0.4px 0 0"></div>
<div style="left:157.5px;top:160.09999999999997px;width:6px;height:4.2px;background:#dcaa5c"></div>
<div class="t" style="left:165.5px;top:159.29px;font-size:4.75px;color:#111;">Shaders</div>
<div style="left:158.1px;top:167.04px;width:3.8px;height:3.8px;border:0.5px solid #c4c4c4;background:#f4f4f4"></div>
<div style="left:159.1px;top:168.74px;width:1.8px;height:0.4px;background:#aaa"></div>
<div style="left:159.79999999999998px;top:168.04px;width:0.4px;height:1.8px;background:#aaa"></div>
<div style="left:164.7px;top:166.44px;width:2.8px;height:1.2px;background:#c99a4e;border-radius:0.4px 0.4px 0 0"></div>
<div style="left:164.7px;top:167.14px;width:6px;height:4.2px;background:#dcaa5c"></div>
<div class="t" style="left:172.7px;top:166.33px;font-size:4.75px;color:#111;">Decal</div>
<div style="left:158.1px;top:174.08px;width:3.8px;height:3.8px;border:0.5px solid #c4c4c4;background:#f4f4f4"></div>
<div style="left:159.1px;top:175.78000000000003px;width:1.8px;height:0.4px;background:#aaa"></div>
<div style="left:159.79999999999998px;top:175.08px;width:0.4px;height:1.8px;background:#aaa"></div>
<div style="left:164.7px;top:173.48000000000002px;width:2.8px;height:1.2px;background:#c99a4e;border-radius:0.4px 0.4px 0 0"></div>
<div style="left:164.7px;top:174.18px;width:6px;height:4.2px;background:#dcaa5c"></div>
<div class="t" style="left:172.7px;top:173.37px;font-size:4.75px;color:#111;">Drawing</div>
<div style="left:158.1px;top:181.11999999999998px;width:3.8px;height:3.8px;border:0.5px solid #c4c4c4;background:#f4f4f4"></div>
<div style="left:159.1px;top:182.82px;width:1.8px;height:0.4px;background:#aaa"></div>
<div style="left:159.79999999999998px;top:182.11999999999998px;width:0.4px;height:1.8px;background:#aaa"></div>
<div style="left:164.7px;top:180.51999999999998px;width:2.8px;height:1.2px;background:#c99a4e;border-radius:0.4px 0.4px 0 0"></div>
<div style="left:164.7px;top:181.21999999999997px;width:6px;height:4.2px;background:#dcaa5c"></div>
<div class="t" style="left:172.7px;top:180.41px;font-size:4.75px;color:#111;">Editor</div>
<div style="left:158.1px;top:188.16px;width:3.8px;height:3.8px;border:0.5px solid #c4c4c4;background:#f4f4f4"></div>
<div style="left:159.1px;top:189.86px;width:1.8px;height:0.4px;background:#aaa"></div>
<div style="left:159.79999999999998px;top:189.16px;width:0.4px;height:1.8px;background:#aaa"></div>
<div style="left:164.7px;top:187.56px;width:2.8px;height:1.2px;background:#c99a4e;border-radius:0.4px 0.4px 0 0"></div>
<div style="left:164.7px;top:188.26px;width:6px;height:4.2px;background:#dcaa5c"></div>
<div class="t" style="left:172.7px;top:187.45px;font-size:4.75px;color:#111;">Lighting</div>
<div style="left:158.1px;top:195.20000000000002px;width:3.8px;height:3.8px;border:0.5px solid #c4c4c4;background:#f4f4f4"></div>
<div style="left:159.1px;top:196.90000000000003px;width:1.8px;height:0.4px;background:#aaa"></div>
<div style="left:159.79999999999998px;top:196.20000000000002px;width:0.4px;height:1.8px;background:#aaa"></div>
<div style="left:164.7px;top:194.60000000000002px;width:2.8px;height:1.2px;background:#c99a4e;border-radius:0.4px 0.4px 0 0"></div>
<div style="left:164.7px;top:195.3px;width:6px;height:4.2px;background:#dcaa5c"></div>
<div class="t" style="left:172.7px;top:194.49px;font-size:4.75px;color:#111;">Misc</div>
<div style="left:158.1px;top:202.23999999999998px;width:3.8px;height:3.8px;border:0.5px solid #c4c4c4;background:#f4f4f4"></div>
<div style="left:159.1px;top:203.94px;width:1.8px;height:0.4px;background:#aaa"></div>
<div style="left:159.79999999999998px;top:203.23999999999998px;width:0.4px;height:1.8px;background:#aaa"></div>
<div style="left:164.7px;top:201.64px;width:2.8px;height:1.2px;background:#c99a4e;border-radius:0.4px 0.4px 0 0"></div>
<div style="left:164.7px;top:202.33999999999997px;width:6px;height:4.2px;background:#dcaa5c"></div>
<div class="t" style="left:172.7px;top:201.53px;font-size:4.75px;color:#111;">Model</div>
<div style="left:158.1px;top:209.28px;width:3.8px;height:3.8px;border:0.5px solid #c4c4c4;background:#f4f4f4"></div>
<div style="left:159.1px;top:210.98000000000002px;width:1.8px;height:0.4px;background:#aaa"></div>
<div style="left:159.79999999999998px;top:210.28px;width:0.4px;height:1.8px;background:#aaa"></div>
<div style="left:164.7px;top:208.68px;width:2.8px;height:1.2px;background:#c99a4e;border-radius:0.4px 0.4px 0 0"></div>
<div style="left:164.7px;top:209.38px;width:6px;height:4.2px;background:#dcaa5c"></div>
<div class="t" style="left:172.7px;top:208.57px;font-size:4.75px;color:#111;">Particles</div>
<div style="left:158.1px;top:216.31999999999996px;width:3.8px;height:3.8px;border:0.5px solid #c4c4c4;background:#f4f4f4"></div>
<div style="left:159.1px;top:218.01999999999998px;width:1.8px;height:0.4px;background:#aaa"></div>
<div style="left:159.79999999999998px;top:217.31999999999996px;width:0.4px;height:1.8px;background:#aaa"></div>
<div style="left:164.7px;top:215.71999999999997px;width:2.8px;height:1.2px;background:#c99a4e;border-radius:0.4px 0.4px 0 0"></div>
<div style="left:164.7px;top:216.41999999999996px;width:6px;height:4.2px;background:#dcaa5c"></div>
<div class="t" style="left:172.7px;top:215.61px;font-size:4.75px;color:#111;">PostEffects</div>
<div style="left:158.1px;top:223.35999999999999px;width:3.8px;height:3.8px;border:0.5px solid #c4c4c4;background:#f4f4f4"></div>
<div style="left:159.1px;top:225.06px;width:1.8px;height:0.4px;background:#aaa"></div>
<div style="left:159.79999999999998px;top:224.35999999999999px;width:0.4px;height:1.8px;background:#aaa"></div>
<div style="left:164.7px;top:222.76px;width:2.8px;height:1.2px;background:#c99a4e;border-radius:0.4px 0.4px 0 0"></div>
<div style="left:164.7px;top:223.45999999999998px;width:6px;height:4.2px;background:#dcaa5c"></div>
<div class="t" style="left:172.7px;top:222.65px;font-size:4.75px;color:#111;">Terrain</div>
<div style="left:158.1px;top:230.4px;width:3.8px;height:3.8px;border:0.5px solid #c4c4c4;background:#f4f4f4"></div>
<div style="left:159.1px;top:232.10000000000002px;width:1.8px;height:0.4px;background:#aaa"></div>
<div style="left:159.79999999999998px;top:231.4px;width:0.4px;height:1.8px;background:#aaa"></div>
<div style="left:164.7px;top:229.8px;width:2.8px;height:1.2px;background:#c99a4e;border-radius:0.4px 0.4px 0 0"></div>
<div style="left:164.7px;top:230.5px;width:6px;height:4.2px;background:#dcaa5c"></div>
<div class="t" style="left:172.7px;top:229.69px;font-size:4.75px;color:#111;">Vegetation</div>
<div style="left:158.1px;top:237.43999999999997px;width:3.8px;height:3.8px;border:0.5px solid #c4c4c4;background:#f4f4f4"></div>
<div style="left:159.1px;top:239.14px;width:1.8px;height:0.4px;background:#aaa"></div>
<div style="left:159.79999999999998px;top:238.43999999999997px;width:0.4px;height:1.8px;background:#aaa"></div>
<div style="left:164.7px;top:236.83999999999997px;width:2.8px;height:1.2px;background:#c99a4e;border-radius:0.4px 0.4px 0 0"></div>
<div style="left:164.7px;top:237.53999999999996px;width:6px;height:4.2px;background:#dcaa5c"></div>
<div class="t" style="left:172.7px;top:236.73px;font-size:4.75px;color:#111;">Water</div>
<div style="left:165.2px;top:243.88px;width:4.8px;height:4.8px;background:radial-gradient(circle at 40% 30%,#aaa,#222 60%,#111);border-radius:50%"></div>
<div class="t" style="left:172.7px;top:243.77px;font-size:4.75px;color:#111;">fractalcube.shader</div>
<div style="left:150.9px;top:251.52px;width:3.8px;height:3.8px;border:0.5px solid #c4c4c4;background:#f4f4f4"></div>
<div style="left:151.9px;top:253.22000000000003px;width:1.8px;height:0.4px;background:#aaa"></div>
<div style="left:157.5px;top:250.92000000000002px;width:2.8px;height:1.2px;background:#c99a4e;border-radius:0.4px 0.4px 0 0"></div>
<div style="left:157.5px;top:251.62px;width:6px;height:4.2px;background:#dcaa5c"></div>
<div class="t" style="left:165.5px;top:250.81px;font-size:4.75px;color:#111;">Source</div>
<svg style="position:absolute;left:164.7px;top:257.96px" width="6" height="5"><path d="M1,2.5 L3,2.5 M2,1.5 L2,3.5" stroke="#a040a0" stroke-width="0.7"/><path d="M3.5,2.5 L5.5,2.5 M4.5,1.5 L4.5,3.5" stroke="#a040a0" stroke-width="0.7"/></svg>
<div class="t" style="left:172.7px;top:257.85px;font-size:4.75px;color:#111;">App.cpp</div>
<svg style="position:absolute;left:164.7px;top:265.0px" width="6" height="5"><path d="M1,2.5 L3,2.5 M2,1.5 L2,3.5" stroke="#a040a0" stroke-width="0.7"/><path d="M3.5,2.5 L5.5,2.5 M4.5,1.5 L4.5,3.5" stroke="#a040a0" stroke-width="0.7"/></svg>
<div class="t" style="left:172.7px;top:264.89px;font-size:4.75px;color:#111;">main.cpp</div>
<svg style="position:absolute;left:164.7px;top:272.04px" width="6" height="5"><path d="M1,2.5 L3,2.5 M2,1.5 L2,3.5" stroke="#a040a0" stroke-width="0.7"/><path d="M3.5,2.5 L5.5,2.5 M4.5,1.5 L4.5,3.5" stroke="#a040a0" stroke-width="0.7"/></svg>
<div class="t" style="left:172.7px;top:271.93px;font-size:4.75px;color:#111;">App.h</div>
<div style="left:251px;top:43px;width:49px;height:10px;background:#fff;border:0.5px solid #ccc;border-bottom:0"></div>
<div class="t" style="left:253.5px;top:45.47px;font-size:4.6px;color:#222;">interactive (1).shader</div>
<div style="left:250px;top:52px;width:359px;height:319px;background:#fff;border:0.5px solid #d4d4d4"></div>
<div style="left:252px;top:52.5px;width:355px;height:305px;background:#fff;border-left:1px solid #777;border-top:1px solid #777"></div>
<div style="left:253.5px;top:53.5px;width:16px;height:297px;background:#efefef"></div>
<div style="left:601px;top:53.5px;width:6px;height:297px;background:#f0f0f0"></div>
<div style="left:601.5px;top:170px;width:5px;height:173px;background:#cdcdcd"></div>
<svg style="position:absolute;left:601px;top:53.5px" width="6" height="6"><path d="M1.6,3.8 L3,2.3 L4.4,3.8" stroke="#333" stroke-width="0.7" fill="none"/></svg>
<svg style="position:absolute;left:601px;top:344.5px" width="6" height="6"><path d="M1.6,2.3 L3,3.8 L4.4,2.3" stroke="#333" stroke-width="0.7" fill="none"/></svg>
<div style="left:253.5px;top:351px;width:353px;height:6px;background:#f0f0f0"></div>
<div style="left:260px;top:351.5px;width:137px;height:5px;background:#cdcdcd"></div>
<svg style="position:absolute;left:253px;top:351px" width="7" height="6"><path d="M4.2,1.6 L2.6,3 L4.2,4.4" stroke="#333" stroke-width="0.7" fill="none"/></svg>
<svg style="position:absolute;left:594px;top:351px" width="7" height="6"><path d="M2.8,1.6 L4.4,3 L2.8,4.4" stroke="#333" stroke-width="0.7" fill="none"/></svg>
<div style="left:278px;top:53.5px;width:323px;height:297.5px;overflow:hidden"><div class="m" style="left:0;top:0.8px;width:3230px;transform:scale(0.1);transform-origin:0 0;font-size:45.5px;line-height:58.6px;color:#000"><b>out</b> <b>vec3</b> ex_VertexCameraPosition;


<b>void</b> main()
{
    <s>//entity matrix</s>
    <b>mat4</b> entitymatrix = entity.matrix<u>[</u><b>gl_InstanceID</b><u>]</u>;
    <b>mat4</b> entitymatrix_ = entitymatrix;
    entitymatrix_<u>[</u><u>0</u><u>]</u><u>[</u><u>3</u><u>]</u>=<u>0.0</u>;
    entitymatrix_<u>[</u><u>1</u><u>]</u><u>[</u><u>3</u><u>]</u>=<u>0.0</u>;
    entitymatrix_<u>[</u><u>2</u><u>]</u><u>[</u><u>3</u><u>]</u>=<u>0.0</u>;
    entitymatrix_<u>[</u><u>3</u><u>]</u><u>[</u><u>3</u><u>]</u>=<u>1.0</u>;

    ex_vertexposition = entitymatrix_ * <b>vec4</b>(vertex_position,<u>1.0</u>);

  <s>//Wind</s>
    <b>float</b> time = currenttime/<u>1000</u>;
    <b>if</b> (vertex_position.y &gt; <u>100.1</u>) {
        ex_vertexposition.x += <u>0.25</u>*<i>cos</i>(<u>1.0</u>*ex_vertexposition.y/<u>2</u> + (time * <u>2</u>))*<i>sin</i>(<u>2.0</u>*ex_vertexposition.y/<u>8</u> + (time
        }



    ex_VertexCameraPosition = <b>vec3</b>(camerainversematrix * ex_vertexposition);



    <s>//Interactive model position</s>
    <b>vec3</b> direction = <i>normalize</i>(ex_vertexposition.xyz - player_pos);
    direction.y = -<u>0.000</u>;       <s>// modulable +/- 0.005</s>

    <b>float</b> dist = <i>distance</i>(player_pos,ex_vertexposition.xyz);
    <b>float</b> power = <i>smoothstep</i>(radius,<u>0.0</u>,dist*dist*<u>0.3</u>);                 <s>// Changed !!</s>
    direction = (<b>vec4</b>(direction,<u>1.0</u>) * entitymatrix_).xyz;
    ex_vertexposition.xyz += direction * power * <u>5</u> * interact_power * <i>cos</i>(<u>5.0</u>-ex_texcoords0.y)*<i>cos</i>(<u>5.5</u>-ex_texcoords0.s


    <b>gl_Position</b> = projectioncameramatrix * ex_vertexposition;


    <s>//normals</s>
    <b>mat3</b> nmat = <b>mat3</b>(entitymatrix_);
    ex_normal = <i>normalize</i>(nmat * vertex_normal);
    ex_tangent = <i>normalize</i>(nmat * vertex_tangent);
    ex_binormal = <i>normalize</i>(nmat * vertex_binormal);

    <s>//texture coordinates</s>
    ex_texcoords0 = vertex_texcoords0;
}
</div></div>
<div class="m" style="left:253px;top:53.8px;width:155px;transform:scale(0.1);transform-origin:0 0;text-align:right;font-size:45px;line-height:58.6px;color:#999">33
34
35
36
37
38
39
40
41
42
43
44
45
46
47
48
49
50
51
52
53
54
55
56
57
58
59
60
61
62
63
64
65
66
67
68
69
70
71
72
73
74
75
76
77
78
79
80
81
82</div>
<div style="left:271px;top:76.5px;width:5px;height:5px;border:0.5px solid #888;background:#fff"></div>
<div style="left:272px;top:78.9px;width:3px;height:0.5px;background:#555"></div>
<div style="left:273.3px;top:81.5px;width:0.5px;height:262px;background:#b0b0b0"></div>
<div style="left:273.3px;top:343px;width:3px;height:0.5px;background:#b0b0b0"></div>
<div style="left:271px;top:152.7px;width:5px;height:5px;border:0.5px solid #888;background:#fff"></div>
<div style="left:272px;top:155.1px;width:3px;height:0.5px;background:#555"></div>
<div style="left:289.6px;top:159px;width:0.4px;height:11px;border-left:0.4px dotted #888"></div>
<div style="left:273.3px;top:167px;width:2.5px;height:0.5px;background:#999"></div>
<div class="t" style="left:255px;top:362.08px;font-size:4.4px;color:#222;">Stage:</div>
<div style="left:271px;top:359px;width:63px;height:9.5px;background:#e5e5e5;border:0.6px solid #c0c0c0"></div>
<div class="t" style="left:273px;top:361.58px;font-size:4.4px;color:#000;">Vertex</div>
<svg style="position:absolute;left:327px;top:361px" width="6" height="5"><path d="M1.5,1.8 L3,3.3 L4.5,1.8" stroke="#555" stroke-width="0.6" fill="none"/></svg>
<div style="left:634px;top:44px;width:22px;height:8.5px;background:#f0f0f0;border:0.5px solid #d0d0d0;border-bottom:0"></div>
<div style="left:656px;top:44px;width:20px;height:8.5px;background:#f0f0f0;border:0.5px solid #d0d0d0;border-bottom:0"></div>
<div style="left:676px;top:44px;width:18px;height:8.5px;background:#f0f0f0;border:0.5px solid #d0d0d0;border-bottom:0"></div>
<div style="left:613px;top:42.8px;width:21px;height:10px;background:#fff;border:0.5px solid #ccc;border-bottom:0"></div>
<div class="t" style="left:614.8px;top:45.78px;font-size:4.4px;color:#222;">Output</div>
<div class="t" style="left:635.3px;top:45.78px;font-size:4.4px;color:#222;">Warnings</div>
<div class="t" style="left:658px;top:45.78px;font-size:4.4px;color:#222;">Errors</div>
<div class="t" style="left:677.5px;top:45.78px;font-size:4.4px;color:#222;">Debug</div>
<div style="left:614px;top:52px;width:112px;height:319px;background:#fff;border:0.6px solid #d0d0d0;border-top-color:#999;border-left-color:#aaa"></div>
<div class="t" style="left:148px;top:378.07px;font-size:4.6px;color:#000;">Line 48</div>
<div style="left:0px;top:406.6px;width:750px;height:16px;background:#3a382c"></div>
<div style="left:18.7px;top:406.6px;width:134px;height:16px;background:#323232"></div>
<div class="t" style="left:34px;top:411.52px;font-size:5.6px;color:#e0e0e0;">Taper ici pour rechercher</div>
<div class="t" style="left:612.4px;top:411.81px;font-size:4.9px;color:#eee;">12°C  Ciel couvert</div>
<div class="t" style="left:690px;top:412.08px;font-size:4.4px;color:#eee;">DEU</div>
<div class="t" style="left:712.5px;top:408.18px;font-size:4.4px;color:#eee;">17:11</div>
<div class="t" style="left:704.8px;top:415.48px;font-size:4.4px;color:#eee;">31/03/2023</div>
<svg style="position:absolute;left:0px;top:406px" width="750" height="16" viewBox="0 406 750 16"><rect x="5" y="410.4" width="3.2" height="3.2" fill="#fff"/><rect x="8.7" y="410" width="3.6" height="3.6" fill="#fff"/><rect x="5" y="414.1" width="3.2" height="3.2" fill="#fff"/><rect x="8.7" y="414.1" width="3.6" height="3.6" fill="#fff"/><circle cx="28" cy="413" r="2" fill="none" stroke="#ddd" stroke-width="0.6"/><line x1="26.6" y1="414.4" x2="24.5" y2="416.5" stroke="#ddd" stroke-width="0.7"/><rect x="159.5" y="411" width="5" height="5.5" fill="none" stroke="#ccc" stroke-width="0.6"/><rect x="158" y="411" width="0.6" height="5.5" fill="#ccc"/><rect x="165.3" y="411" width="0.6" height="5.5" fill="#ccc"/><circle cx="182" cy="414" r="3.6" fill="#1e88d8"/><path d="M179,414 Q180,411 183,411.3 Q185.6,412 185.4,414.5 L181.5,414.5 Q181.8,416.5 185,416.4 Q183,418 181,417 Q178.8,416 179,414Z" fill="#3fd08a"/><rect x="198" y="411" width="7.5" height="6" fill="#f3c544"/><rect x="198" y="410.3" width="3" height="1.2" fill="#e0a830"/><rect x="199.5" y="414" width="4.5" height="2.6" fill="#2a7ad0"/><circle cx="220.7" cy="414" r="3.6" fill="#4aa0e8"/><circle cx="220.7" cy="414" r="1.8" fill="#f8d060"/><circle cx="239.9" cy="414" r="3.7" fill="#dd4433"/><path d="M239.9,414 L236.5,412 A3.7,3.7 0 0 0 238,417.2Z" fill="#2aa04a"/><path d="M239.9,414 L238,417.2 A3.7,3.7 0 0 0 243.5,413Z" fill="#f5c518"/><circle cx="239.9" cy="414" r="1.6" fill="#fff"/><circle cx="239.9" cy="414" r="1.2" fill="#3a7ae0"/><rect x="255" y="411.2" width="7.6" height="6.6" rx="0.8" fill="#f2f2f2"/><rect x="257" y="413" width="1.5" height="1.5" fill="#f25022"/><rect x="259" y="413" width="1.5" height="1.5" fill="#7fba00"/><rect x="257" y="415" width="1.5" height="1.5" fill="#00a4ef"/><rect x="259" y="415" width="1.5" height="1.5" fill="#ffb900"/><circle cx="278" cy="414" r="3.6" fill="#1ed760"/><path d="M276,413 Q278,412.3 280,413 M276.3,414.3 Q278,413.8 279.7,414.4" stroke="#1a3a20" stroke-width="0.5" fill="none"/><path d="M296.7,410 L299.8,417.5 L293.6,417.5Z" fill="#f08a10"/><rect x="294.8" y="413" width="3.8" height="0.8" fill="#fff"/><rect x="294" y="415.3" width="5.4" height="0.8" fill="#fff"/><circle cx="315.9" cy="414" r="3.3" fill="#f26b2a"/><circle cx="315.9" cy="414" r="1.4" fill="#3a3830"/><circle cx="334.8" cy="414" r="3" fill="none" stroke="#9a2ae0" stroke-width="1.3"/><circle cx="354.7" cy="414" r="3.6" fill="#2a7ae8"/><circle cx="354.7" cy="414" r="2" fill="none" stroke="#fff" stroke-width="0.6"/><circle cx="373.3" cy="414" r="3.6" fill="#1a3a6a"/><path d="M370.1,414.5 L373.8,415.5 L375.3,413" stroke="#fff" stroke-width="1" fill="none"/><circle cx="374.6" cy="413" r="1" fill="#fff"/><path d="M389.5,410.3 L395.5,410.3 L395.5,416.8 L392.5,418.2 L389.5,416.8Z" fill="#111" stroke="#ccc" stroke-width="0.3"/><rect x="390.5" y="411.5" width="4" height="1.2" fill="#ddd"/><circle cx="411.5" cy="414" r="3.5" fill="#7a6ae0"/><circle cx="411.5" cy="414" r="2.5" fill="#3ac0d0"/><circle cx="411.5" cy="414" r="1.5" fill="#e060b0"/><circle cx="411.5" cy="414" r="0.7" fill="#eee"/><path d="M427.7,410.3 L433.7,410.3 L433.7,416.8 L430.7,418.2 L427.7,416.8Z" fill="#111" stroke="#ccc" stroke-width="0.3"/><rect x="428.7" y="411.5" width="4" height="1.2" fill="#ddd"/><circle cx="449.3" cy="414" r="3.6" fill="#1a3a6a"/><path d="M446.1,414.5 L449.8,415.5 L451.3,413" stroke="#fff" stroke-width="1" fill="none"/><circle cx="450.6" cy="413" r="1" fill="#fff"/><circle cx="469.3" cy="414" r="3.7" fill="#dd4433"/><path d="M469.3,414 L465.9,412 A3.7,3.7 0 0 0 467.4,417.2Z" fill="#2aa04a"/><path d="M469.3,414 L467.4,417.2 A3.7,3.7 0 0 0 472.9,413Z" fill="#f5c518"/><circle cx="469.3" cy="414" r="1.6" fill="#fff"/><circle cx="469.3" cy="414" r="1.2" fill="#3a7ae0"/><path d="M484.5,411.8 L491.5,410.5 L491.5,418 L484.5,418Z" fill="#2a8ae0"/><path d="M487,413.2 L489.8,414.8 L487,416.4Z" fill="#fff"/><rect x="498" y="406.6" width="18" height="16" fill="#56544a"/><rect x="503.2" y="410.5" width="7" height="7" rx="1.2" fill="#111" stroke="#777" stroke-width="0.3"/><path d="M505,412.5 L508,412.5 L508,415" stroke="#ddd" stroke-width="0.7" fill="none"/><rect x="194" y="421" width="16" height="1" fill="#d8a882"/><rect x="404" y="421" width="16" height="1" fill="#d8a882"/><rect x="423.5" y="421" width="16" height="1" fill="#d8a882"/><rect x="443" y="421" width="16" height="1" fill="#d8a882"/><rect x="462" y="421" width="16" height="1" fill="#d8a882"/><rect x="481" y="421" width="16" height="1" fill="#d8a882"/><rect x="500" y="421" width="16" height="1" fill="#d8a882"/><circle cx="606" cy="412.5" r="2.3" fill="#f5b830"/><ellipse cx="604.5" cy="415.2" rx="4.5" ry="2.3" fill="#cfe0f0"/><circle cx="603" cy="413.6" r="2" fill="#dde8f4"/><path d="M662.3,415 L664.2,413 L666.1,415" stroke="#ddd" stroke-width="0.6" fill="none"/><rect x="671.8" y="411.8" width="5" height="3.8" fill="none" stroke="#ddd" stroke-width="0.6"/><rect x="670.5" y="416" width="2.5" height="0.6" fill="#ddd"/><path d="M680.8,413 L682,413 L683.5,411.5 L683.5,416.5 L682,415 L680.8,415Z" fill="none" stroke="#ddd" stroke-width="0.5"/><path d="M684.5,412.5 Q685.5,414 684.5,415.5" stroke="#ddd" stroke-width="0.5" fill="none"/><path d="M734,411 L740,411 L740,416 L737,416 L735,417.5 L735,416 L734,416Z" fill="none" stroke="#ddd" stroke-width="0.6"/><circle cx="739.8" cy="416.5" r="1.8" fill="#fff"/></svg>
<svg style="position:absolute;left:697px;top:384px" width="7" height="8"><circle cx="4" cy="3.3" r="1.6" fill="none" stroke="#666" stroke-width="0.6"/><line x1="2.9" y1="4.4" x2="1.3" y2="6.2" stroke="#666" stroke-width="0.8"/></svg>
</body></html>
